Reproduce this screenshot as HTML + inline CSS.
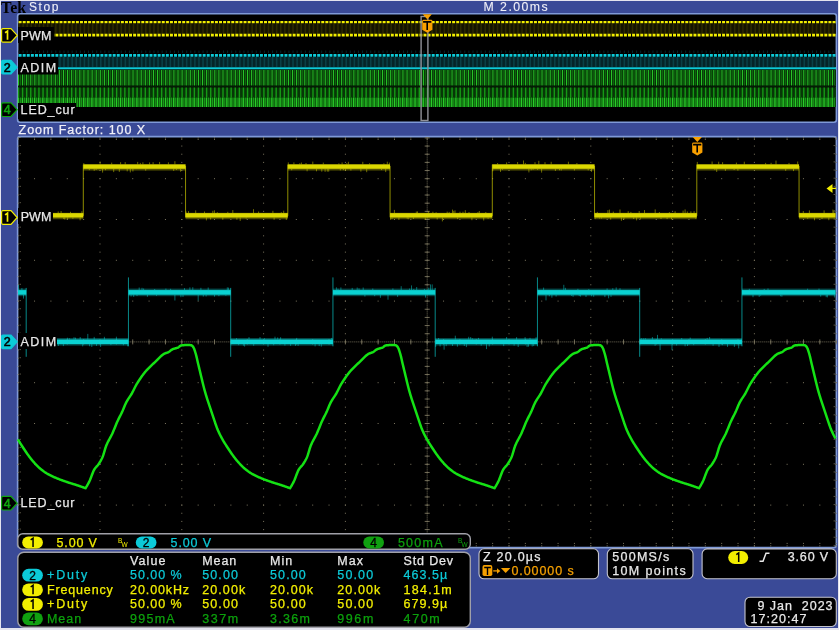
<!DOCTYPE html>
<html><head><meta charset="utf-8"><style>html,body{margin:0;padding:0;background:#3c4b9b;overflow:hidden}svg{display:block;will-change:transform}</style></head>
<body><svg width="839" height="630" viewBox="0 0 839 630"><rect x="0" y="0" width="839" height="630" fill="#e4e4ee"/>
<rect x="1" y="1" width="837" height="627" fill="#3a4a97"/>
<text x="1.0" y="12.6" font-family="Liberation Serif" font-size="16.5" font-weight="bold" fill="#000" text-anchor="start" textLength="25" lengthAdjust="spacingAndGlyphs"  xml:space="preserve">Tek</text>
<text x="29" y="10.9" font-family="Liberation Sans" font-size="12" font-weight="normal" fill="#f0f0f8" text-anchor="start" textLength="29.5" lengthAdjust="spacing"  stroke="#f0f0f8" stroke-width="0.1" xml:space="preserve">Stop</text>
<text x="483.6" y="11" font-family="Liberation Sans" font-size="12.3" font-weight="normal" fill="#f0f0f8" text-anchor="start" textLength="64" lengthAdjust="spacing"  stroke="#f0f0f8" stroke-width="0.1" xml:space="preserve">M 2.00ms</text>
<rect x="17.6" y="13.8" width="818.8" height="108.4" rx="2.5" fill="#000" stroke="#7f9ad8" stroke-width="1.6"/>
<rect x="18" y="23.5" width="818" height="10.5" fill="#141300"/>
<path d="M19.00 23.5v10.5 M23.09 23.5v10.5 M27.18 23.5v10.5 M31.27 23.5v10.5 M35.36 23.5v10.5 M39.45 23.5v10.5 M43.54 23.5v10.5 M47.63 23.5v10.5 M51.72 23.5v10.5 M55.81 23.5v10.5 M59.90 23.5v10.5 M63.99 23.5v10.5 M68.08 23.5v10.5 M72.17 23.5v10.5 M76.26 23.5v10.5 M80.35 23.5v10.5 M84.44 23.5v10.5 M88.53 23.5v10.5 M92.62 23.5v10.5 M96.71 23.5v10.5 M100.80 23.5v10.5 M104.89 23.5v10.5 M108.98 23.5v10.5 M113.07 23.5v10.5 M117.16 23.5v10.5 M121.25 23.5v10.5 M125.34 23.5v10.5 M129.43 23.5v10.5 M133.52 23.5v10.5 M137.61 23.5v10.5 M141.70 23.5v10.5 M145.79 23.5v10.5 M149.88 23.5v10.5 M153.97 23.5v10.5 M158.06 23.5v10.5 M162.15 23.5v10.5 M166.24 23.5v10.5 M170.33 23.5v10.5 M174.42 23.5v10.5 M178.51 23.5v10.5 M182.60 23.5v10.5 M186.69 23.5v10.5 M190.78 23.5v10.5 M194.87 23.5v10.5 M198.96 23.5v10.5 M203.05 23.5v10.5 M207.14 23.5v10.5 M211.23 23.5v10.5 M215.32 23.5v10.5 M219.41 23.5v10.5 M223.50 23.5v10.5 M227.59 23.5v10.5 M231.68 23.5v10.5 M235.77 23.5v10.5 M239.86 23.5v10.5 M243.95 23.5v10.5 M248.04 23.5v10.5 M252.13 23.5v10.5 M256.22 23.5v10.5 M260.31 23.5v10.5 M264.40 23.5v10.5 M268.49 23.5v10.5 M272.58 23.5v10.5 M276.67 23.5v10.5 M280.76 23.5v10.5 M284.85 23.5v10.5 M288.94 23.5v10.5 M293.03 23.5v10.5 M297.12 23.5v10.5 M301.21 23.5v10.5 M305.30 23.5v10.5 M309.39 23.5v10.5 M313.48 23.5v10.5 M317.57 23.5v10.5 M321.66 23.5v10.5 M325.75 23.5v10.5 M329.84 23.5v10.5 M333.93 23.5v10.5 M338.02 23.5v10.5 M342.11 23.5v10.5 M346.20 23.5v10.5 M350.29 23.5v10.5 M354.38 23.5v10.5 M358.47 23.5v10.5 M362.56 23.5v10.5 M366.65 23.5v10.5 M370.74 23.5v10.5 M374.83 23.5v10.5 M378.92 23.5v10.5 M383.01 23.5v10.5 M387.10 23.5v10.5 M391.19 23.5v10.5 M395.28 23.5v10.5 M399.37 23.5v10.5 M403.46 23.5v10.5 M407.55 23.5v10.5 M411.64 23.5v10.5 M415.73 23.5v10.5 M419.82 23.5v10.5 M423.91 23.5v10.5 M428.00 23.5v10.5 M432.09 23.5v10.5 M436.18 23.5v10.5 M440.27 23.5v10.5 M444.36 23.5v10.5 M448.45 23.5v10.5 M452.54 23.5v10.5 M456.63 23.5v10.5 M460.72 23.5v10.5 M464.81 23.5v10.5 M468.90 23.5v10.5 M472.99 23.5v10.5 M477.08 23.5v10.5 M481.17 23.5v10.5 M485.26 23.5v10.5 M489.35 23.5v10.5 M493.44 23.5v10.5 M497.53 23.5v10.5 M501.62 23.5v10.5 M505.71 23.5v10.5 M509.80 23.5v10.5 M513.89 23.5v10.5 M517.98 23.5v10.5 M522.07 23.5v10.5 M526.16 23.5v10.5 M530.25 23.5v10.5 M534.34 23.5v10.5 M538.43 23.5v10.5 M542.52 23.5v10.5 M546.61 23.5v10.5 M550.70 23.5v10.5 M554.79 23.5v10.5 M558.88 23.5v10.5 M562.97 23.5v10.5 M567.06 23.5v10.5 M571.15 23.5v10.5 M575.24 23.5v10.5 M579.33 23.5v10.5 M583.42 23.5v10.5 M587.51 23.5v10.5 M591.60 23.5v10.5 M595.69 23.5v10.5 M599.78 23.5v10.5 M603.87 23.5v10.5 M607.96 23.5v10.5 M612.05 23.5v10.5 M616.14 23.5v10.5 M620.23 23.5v10.5 M624.32 23.5v10.5 M628.41 23.5v10.5 M632.50 23.5v10.5 M636.59 23.5v10.5 M640.68 23.5v10.5 M644.77 23.5v10.5 M648.86 23.5v10.5 M652.95 23.5v10.5 M657.04 23.5v10.5 M661.13 23.5v10.5 M665.22 23.5v10.5 M669.31 23.5v10.5 M673.40 23.5v10.5 M677.49 23.5v10.5 M681.58 23.5v10.5 M685.67 23.5v10.5 M689.76 23.5v10.5 M693.85 23.5v10.5 M697.94 23.5v10.5 M702.03 23.5v10.5 M706.12 23.5v10.5 M710.21 23.5v10.5 M714.30 23.5v10.5 M718.39 23.5v10.5 M722.48 23.5v10.5 M726.57 23.5v10.5 M730.66 23.5v10.5 M734.75 23.5v10.5 M738.84 23.5v10.5 M742.93 23.5v10.5 M747.02 23.5v10.5 M751.11 23.5v10.5 M755.20 23.5v10.5 M759.29 23.5v10.5 M763.38 23.5v10.5 M767.47 23.5v10.5 M771.56 23.5v10.5 M775.65 23.5v10.5 M779.74 23.5v10.5 M783.83 23.5v10.5 M787.92 23.5v10.5 M792.01 23.5v10.5 M796.10 23.5v10.5 M800.19 23.5v10.5 M804.28 23.5v10.5 M808.37 23.5v10.5 M812.46 23.5v10.5 M816.55 23.5v10.5 M820.64 23.5v10.5 M824.73 23.5v10.5 M828.82 23.5v10.5 M832.91 23.5v10.5" stroke="#2c2900" stroke-width="1.6" fill="none" opacity="1.0"/>
<line x1="18.6" y1="22.2" x2="836" y2="22.2" stroke="#f2ee00" stroke-width="2.3" stroke-dasharray="3.0 1.09"/>
<line x1="18.6" y1="35.1" x2="836" y2="35.1" stroke="#f2ee00" stroke-width="2.8" stroke-dasharray="3.0 1.09"/>
<path d="M19.00 50.5v2.5 M23.09 50.5v2.5 M27.18 50.5v2.5 M31.27 50.5v2.5 M35.36 50.5v2.5 M39.45 50.5v2.5 M43.54 50.5v2.5 M47.63 50.5v2.5 M51.72 50.5v2.5 M55.81 50.5v2.5 M59.90 50.5v2.5 M63.99 50.5v2.5 M68.08 50.5v2.5 M72.17 50.5v2.5 M76.26 50.5v2.5 M80.35 50.5v2.5 M84.44 50.5v2.5 M88.53 50.5v2.5 M92.62 50.5v2.5 M96.71 50.5v2.5 M100.80 50.5v2.5 M104.89 50.5v2.5 M108.98 50.5v2.5 M113.07 50.5v2.5 M117.16 50.5v2.5 M121.25 50.5v2.5 M125.34 50.5v2.5 M129.43 50.5v2.5 M133.52 50.5v2.5 M137.61 50.5v2.5 M141.70 50.5v2.5 M145.79 50.5v2.5 M149.88 50.5v2.5 M153.97 50.5v2.5 M158.06 50.5v2.5 M162.15 50.5v2.5 M166.24 50.5v2.5 M170.33 50.5v2.5 M174.42 50.5v2.5 M178.51 50.5v2.5 M182.60 50.5v2.5 M186.69 50.5v2.5 M190.78 50.5v2.5 M194.87 50.5v2.5 M198.96 50.5v2.5 M203.05 50.5v2.5 M207.14 50.5v2.5 M211.23 50.5v2.5 M215.32 50.5v2.5 M219.41 50.5v2.5 M223.50 50.5v2.5 M227.59 50.5v2.5 M231.68 50.5v2.5 M235.77 50.5v2.5 M239.86 50.5v2.5 M243.95 50.5v2.5 M248.04 50.5v2.5 M252.13 50.5v2.5 M256.22 50.5v2.5 M260.31 50.5v2.5 M264.40 50.5v2.5 M268.49 50.5v2.5 M272.58 50.5v2.5 M276.67 50.5v2.5 M280.76 50.5v2.5 M284.85 50.5v2.5 M288.94 50.5v2.5 M293.03 50.5v2.5 M297.12 50.5v2.5 M301.21 50.5v2.5 M305.30 50.5v2.5 M309.39 50.5v2.5 M313.48 50.5v2.5 M317.57 50.5v2.5 M321.66 50.5v2.5 M325.75 50.5v2.5 M329.84 50.5v2.5 M333.93 50.5v2.5 M338.02 50.5v2.5 M342.11 50.5v2.5 M346.20 50.5v2.5 M350.29 50.5v2.5 M354.38 50.5v2.5 M358.47 50.5v2.5 M362.56 50.5v2.5 M366.65 50.5v2.5 M370.74 50.5v2.5 M374.83 50.5v2.5 M378.92 50.5v2.5 M383.01 50.5v2.5 M387.10 50.5v2.5 M391.19 50.5v2.5 M395.28 50.5v2.5 M399.37 50.5v2.5 M403.46 50.5v2.5 M407.55 50.5v2.5 M411.64 50.5v2.5 M415.73 50.5v2.5 M419.82 50.5v2.5 M423.91 50.5v2.5 M428.00 50.5v2.5 M432.09 50.5v2.5 M436.18 50.5v2.5 M440.27 50.5v2.5 M444.36 50.5v2.5 M448.45 50.5v2.5 M452.54 50.5v2.5 M456.63 50.5v2.5 M460.72 50.5v2.5 M464.81 50.5v2.5 M468.90 50.5v2.5 M472.99 50.5v2.5 M477.08 50.5v2.5 M481.17 50.5v2.5 M485.26 50.5v2.5 M489.35 50.5v2.5 M493.44 50.5v2.5 M497.53 50.5v2.5 M501.62 50.5v2.5 M505.71 50.5v2.5 M509.80 50.5v2.5 M513.89 50.5v2.5 M517.98 50.5v2.5 M522.07 50.5v2.5 M526.16 50.5v2.5 M530.25 50.5v2.5 M534.34 50.5v2.5 M538.43 50.5v2.5 M542.52 50.5v2.5 M546.61 50.5v2.5 M550.70 50.5v2.5 M554.79 50.5v2.5 M558.88 50.5v2.5 M562.97 50.5v2.5 M567.06 50.5v2.5 M571.15 50.5v2.5 M575.24 50.5v2.5 M579.33 50.5v2.5 M583.42 50.5v2.5 M587.51 50.5v2.5 M591.60 50.5v2.5 M595.69 50.5v2.5 M599.78 50.5v2.5 M603.87 50.5v2.5 M607.96 50.5v2.5 M612.05 50.5v2.5 M616.14 50.5v2.5 M620.23 50.5v2.5 M624.32 50.5v2.5 M628.41 50.5v2.5 M632.50 50.5v2.5 M636.59 50.5v2.5 M640.68 50.5v2.5 M644.77 50.5v2.5 M648.86 50.5v2.5 M652.95 50.5v2.5 M657.04 50.5v2.5 M661.13 50.5v2.5 M665.22 50.5v2.5 M669.31 50.5v2.5 M673.40 50.5v2.5 M677.49 50.5v2.5 M681.58 50.5v2.5 M685.67 50.5v2.5 M689.76 50.5v2.5 M693.85 50.5v2.5 M697.94 50.5v2.5 M702.03 50.5v2.5 M706.12 50.5v2.5 M710.21 50.5v2.5 M714.30 50.5v2.5 M718.39 50.5v2.5 M722.48 50.5v2.5 M726.57 50.5v2.5 M730.66 50.5v2.5 M734.75 50.5v2.5 M738.84 50.5v2.5 M742.93 50.5v2.5 M747.02 50.5v2.5 M751.11 50.5v2.5 M755.20 50.5v2.5 M759.29 50.5v2.5 M763.38 50.5v2.5 M767.47 50.5v2.5 M771.56 50.5v2.5 M775.65 50.5v2.5 M779.74 50.5v2.5 M783.83 50.5v2.5 M787.92 50.5v2.5 M792.01 50.5v2.5 M796.10 50.5v2.5 M800.19 50.5v2.5 M804.28 50.5v2.5 M808.37 50.5v2.5 M812.46 50.5v2.5 M816.55 50.5v2.5 M820.64 50.5v2.5 M824.73 50.5v2.5 M828.82 50.5v2.5 M832.91 50.5v2.5" stroke="#06262a" stroke-width="1.0" fill="none" opacity="1.0"/>
<rect x="18" y="57" width="818" height="10" fill="#052428"/>
<path d="M19.00 57v10 M23.09 57v10 M27.18 57v10 M31.27 57v10 M35.36 57v10 M39.45 57v10 M43.54 57v10 M47.63 57v10 M51.72 57v10 M55.81 57v10 M59.90 57v10 M63.99 57v10 M68.08 57v10 M72.17 57v10 M76.26 57v10 M80.35 57v10 M84.44 57v10 M88.53 57v10 M92.62 57v10 M96.71 57v10 M100.80 57v10 M104.89 57v10 M108.98 57v10 M113.07 57v10 M117.16 57v10 M121.25 57v10 M125.34 57v10 M129.43 57v10 M133.52 57v10 M137.61 57v10 M141.70 57v10 M145.79 57v10 M149.88 57v10 M153.97 57v10 M158.06 57v10 M162.15 57v10 M166.24 57v10 M170.33 57v10 M174.42 57v10 M178.51 57v10 M182.60 57v10 M186.69 57v10 M190.78 57v10 M194.87 57v10 M198.96 57v10 M203.05 57v10 M207.14 57v10 M211.23 57v10 M215.32 57v10 M219.41 57v10 M223.50 57v10 M227.59 57v10 M231.68 57v10 M235.77 57v10 M239.86 57v10 M243.95 57v10 M248.04 57v10 M252.13 57v10 M256.22 57v10 M260.31 57v10 M264.40 57v10 M268.49 57v10 M272.58 57v10 M276.67 57v10 M280.76 57v10 M284.85 57v10 M288.94 57v10 M293.03 57v10 M297.12 57v10 M301.21 57v10 M305.30 57v10 M309.39 57v10 M313.48 57v10 M317.57 57v10 M321.66 57v10 M325.75 57v10 M329.84 57v10 M333.93 57v10 M338.02 57v10 M342.11 57v10 M346.20 57v10 M350.29 57v10 M354.38 57v10 M358.47 57v10 M362.56 57v10 M366.65 57v10 M370.74 57v10 M374.83 57v10 M378.92 57v10 M383.01 57v10 M387.10 57v10 M391.19 57v10 M395.28 57v10 M399.37 57v10 M403.46 57v10 M407.55 57v10 M411.64 57v10 M415.73 57v10 M419.82 57v10 M423.91 57v10 M428.00 57v10 M432.09 57v10 M436.18 57v10 M440.27 57v10 M444.36 57v10 M448.45 57v10 M452.54 57v10 M456.63 57v10 M460.72 57v10 M464.81 57v10 M468.90 57v10 M472.99 57v10 M477.08 57v10 M481.17 57v10 M485.26 57v10 M489.35 57v10 M493.44 57v10 M497.53 57v10 M501.62 57v10 M505.71 57v10 M509.80 57v10 M513.89 57v10 M517.98 57v10 M522.07 57v10 M526.16 57v10 M530.25 57v10 M534.34 57v10 M538.43 57v10 M542.52 57v10 M546.61 57v10 M550.70 57v10 M554.79 57v10 M558.88 57v10 M562.97 57v10 M567.06 57v10 M571.15 57v10 M575.24 57v10 M579.33 57v10 M583.42 57v10 M587.51 57v10 M591.60 57v10 M595.69 57v10 M599.78 57v10 M603.87 57v10 M607.96 57v10 M612.05 57v10 M616.14 57v10 M620.23 57v10 M624.32 57v10 M628.41 57v10 M632.50 57v10 M636.59 57v10 M640.68 57v10 M644.77 57v10 M648.86 57v10 M652.95 57v10 M657.04 57v10 M661.13 57v10 M665.22 57v10 M669.31 57v10 M673.40 57v10 M677.49 57v10 M681.58 57v10 M685.67 57v10 M689.76 57v10 M693.85 57v10 M697.94 57v10 M702.03 57v10 M706.12 57v10 M710.21 57v10 M714.30 57v10 M718.39 57v10 M722.48 57v10 M726.57 57v10 M730.66 57v10 M734.75 57v10 M738.84 57v10 M742.93 57v10 M747.02 57v10 M751.11 57v10 M755.20 57v10 M759.29 57v10 M763.38 57v10 M767.47 57v10 M771.56 57v10 M775.65 57v10 M779.74 57v10 M783.83 57v10 M787.92 57v10 M792.01 57v10 M796.10 57v10 M800.19 57v10 M804.28 57v10 M808.37 57v10 M812.46 57v10 M816.55 57v10 M820.64 57v10 M824.73 57v10 M828.82 57v10 M832.91 57v10" stroke="#0a4046" stroke-width="1.6" fill="none" opacity="1.0"/>
<line x1="18.6" y1="55.4" x2="836" y2="55.4" stroke="#0ccad8" stroke-width="2.8" stroke-dasharray="3.0 1.09"/>
<line x1="18" y1="68.3" x2="836" y2="68.3" stroke="#0ccad8" stroke-width="2.2"/>
<rect x="18" y="69.5" width="818" height="16" fill="#062806"/>
<rect x="18" y="85.5" width="818" height="2" fill="#041c04"/>
<rect x="18" y="87.5" width="818" height="10" fill="#073607"/>
<rect x="18" y="97.5" width="818" height="9.5" fill="#084008"/>
<path d="M20.50 70v15.5 M24.59 70v15.5 M28.68 70v15.5 M32.77 70v15.5 M36.86 70v15.5 M40.95 70v15.5 M45.04 70v15.5 M49.13 70v15.5 M53.22 70v15.5 M57.31 70v15.5 M61.40 70v15.5 M65.49 70v15.5 M69.58 70v15.5 M73.67 70v15.5 M77.76 70v15.5 M81.85 70v15.5 M85.94 70v15.5 M90.03 70v15.5 M94.12 70v15.5 M98.21 70v15.5 M102.30 70v15.5 M106.39 70v15.5 M110.48 70v15.5 M114.57 70v15.5 M118.66 70v15.5 M122.75 70v15.5 M126.84 70v15.5 M130.93 70v15.5 M135.02 70v15.5 M139.11 70v15.5 M143.20 70v15.5 M147.29 70v15.5 M151.38 70v15.5 M155.47 70v15.5 M159.56 70v15.5 M163.65 70v15.5 M167.74 70v15.5 M171.83 70v15.5 M175.92 70v15.5 M180.01 70v15.5 M184.10 70v15.5 M188.19 70v15.5 M192.28 70v15.5 M196.37 70v15.5 M200.46 70v15.5 M204.55 70v15.5 M208.64 70v15.5 M212.73 70v15.5 M216.82 70v15.5 M220.91 70v15.5 M225.00 70v15.5 M229.09 70v15.5 M233.18 70v15.5 M237.27 70v15.5 M241.36 70v15.5 M245.45 70v15.5 M249.54 70v15.5 M253.63 70v15.5 M257.72 70v15.5 M261.81 70v15.5 M265.90 70v15.5 M269.99 70v15.5 M274.08 70v15.5 M278.17 70v15.5 M282.26 70v15.5 M286.35 70v15.5 M290.44 70v15.5 M294.53 70v15.5 M298.62 70v15.5 M302.71 70v15.5 M306.80 70v15.5 M310.89 70v15.5 M314.98 70v15.5 M319.07 70v15.5 M323.16 70v15.5 M327.25 70v15.5 M331.34 70v15.5 M335.43 70v15.5 M339.52 70v15.5 M343.61 70v15.5 M347.70 70v15.5 M351.79 70v15.5 M355.88 70v15.5 M359.97 70v15.5 M364.06 70v15.5 M368.15 70v15.5 M372.24 70v15.5 M376.33 70v15.5 M380.42 70v15.5 M384.51 70v15.5 M388.60 70v15.5 M392.69 70v15.5 M396.78 70v15.5 M400.87 70v15.5 M404.96 70v15.5 M409.05 70v15.5 M413.14 70v15.5 M417.23 70v15.5 M421.32 70v15.5 M425.41 70v15.5 M429.50 70v15.5 M433.59 70v15.5 M437.68 70v15.5 M441.77 70v15.5 M445.86 70v15.5 M449.95 70v15.5 M454.04 70v15.5 M458.13 70v15.5 M462.22 70v15.5 M466.31 70v15.5 M470.40 70v15.5 M474.49 70v15.5 M478.58 70v15.5 M482.67 70v15.5 M486.76 70v15.5 M490.85 70v15.5 M494.94 70v15.5 M499.03 70v15.5 M503.12 70v15.5 M507.21 70v15.5 M511.30 70v15.5 M515.39 70v15.5 M519.48 70v15.5 M523.57 70v15.5 M527.66 70v15.5 M531.75 70v15.5 M535.84 70v15.5 M539.93 70v15.5 M544.02 70v15.5 M548.11 70v15.5 M552.20 70v15.5 M556.29 70v15.5 M560.38 70v15.5 M564.47 70v15.5 M568.56 70v15.5 M572.65 70v15.5 M576.74 70v15.5 M580.83 70v15.5 M584.92 70v15.5 M589.01 70v15.5 M593.10 70v15.5 M597.19 70v15.5 M601.28 70v15.5 M605.37 70v15.5 M609.46 70v15.5 M613.55 70v15.5 M617.64 70v15.5 M621.73 70v15.5 M625.82 70v15.5 M629.91 70v15.5 M634.00 70v15.5 M638.09 70v15.5 M642.18 70v15.5 M646.27 70v15.5 M650.36 70v15.5 M654.45 70v15.5 M658.54 70v15.5 M662.63 70v15.5 M666.72 70v15.5 M670.81 70v15.5 M674.90 70v15.5 M678.99 70v15.5 M683.08 70v15.5 M687.17 70v15.5 M691.26 70v15.5 M695.35 70v15.5 M699.44 70v15.5 M703.53 70v15.5 M707.62 70v15.5 M711.71 70v15.5 M715.80 70v15.5 M719.89 70v15.5 M723.98 70v15.5 M728.07 70v15.5 M732.16 70v15.5 M736.25 70v15.5 M740.34 70v15.5 M744.43 70v15.5 M748.52 70v15.5 M752.61 70v15.5 M756.70 70v15.5 M760.79 70v15.5 M764.88 70v15.5 M768.97 70v15.5 M773.06 70v15.5 M777.15 70v15.5 M781.24 70v15.5 M785.33 70v15.5 M789.42 70v15.5 M793.51 70v15.5 M797.60 70v15.5 M801.69 70v15.5 M805.78 70v15.5 M809.87 70v15.5 M813.96 70v15.5 M818.05 70v15.5 M822.14 70v15.5 M826.23 70v15.5 M830.32 70v15.5 M834.41 70v15.5" stroke="#0e640e" stroke-width="1.4" fill="none" opacity="1.0"/>
<path d="M18.50 70v15.5 M22.59 70v15.5 M26.68 70v15.5 M30.77 70v15.5 M34.86 70v15.5 M38.95 70v15.5 M43.04 70v15.5 M47.13 70v15.5 M51.22 70v15.5 M55.31 70v15.5 M59.40 70v15.5 M63.49 70v15.5 M67.58 70v15.5 M71.67 70v15.5 M75.76 70v15.5 M79.85 70v15.5 M83.94 70v15.5 M88.03 70v15.5 M92.12 70v15.5 M96.21 70v15.5 M100.30 70v15.5 M104.39 70v15.5 M108.48 70v15.5 M112.57 70v15.5 M116.66 70v15.5 M120.75 70v15.5 M124.84 70v15.5 M128.93 70v15.5 M133.02 70v15.5 M137.11 70v15.5 M141.20 70v15.5 M145.29 70v15.5 M149.38 70v15.5 M153.47 70v15.5 M157.56 70v15.5 M161.65 70v15.5 M165.74 70v15.5 M169.83 70v15.5 M173.92 70v15.5 M178.01 70v15.5 M182.10 70v15.5 M186.19 70v15.5 M190.28 70v15.5 M194.37 70v15.5 M198.46 70v15.5 M202.55 70v15.5 M206.64 70v15.5 M210.73 70v15.5 M214.82 70v15.5 M218.91 70v15.5 M223.00 70v15.5 M227.09 70v15.5 M231.18 70v15.5 M235.27 70v15.5 M239.36 70v15.5 M243.45 70v15.5 M247.54 70v15.5 M251.63 70v15.5 M255.72 70v15.5 M259.81 70v15.5 M263.90 70v15.5 M267.99 70v15.5 M272.08 70v15.5 M276.17 70v15.5 M280.26 70v15.5 M284.35 70v15.5 M288.44 70v15.5 M292.53 70v15.5 M296.62 70v15.5 M300.71 70v15.5 M304.80 70v15.5 M308.89 70v15.5 M312.98 70v15.5 M317.07 70v15.5 M321.16 70v15.5 M325.25 70v15.5 M329.34 70v15.5 M333.43 70v15.5 M337.52 70v15.5 M341.61 70v15.5 M345.70 70v15.5 M349.79 70v15.5 M353.88 70v15.5 M357.97 70v15.5 M362.06 70v15.5 M366.15 70v15.5 M370.24 70v15.5 M374.33 70v15.5 M378.42 70v15.5 M382.51 70v15.5 M386.60 70v15.5 M390.69 70v15.5 M394.78 70v15.5 M398.87 70v15.5 M402.96 70v15.5 M407.05 70v15.5 M411.14 70v15.5 M415.23 70v15.5 M419.32 70v15.5 M423.41 70v15.5 M427.50 70v15.5 M431.59 70v15.5 M435.68 70v15.5 M439.77 70v15.5 M443.86 70v15.5 M447.95 70v15.5 M452.04 70v15.5 M456.13 70v15.5 M460.22 70v15.5 M464.31 70v15.5 M468.40 70v15.5 M472.49 70v15.5 M476.58 70v15.5 M480.67 70v15.5 M484.76 70v15.5 M488.85 70v15.5 M492.94 70v15.5 M497.03 70v15.5 M501.12 70v15.5 M505.21 70v15.5 M509.30 70v15.5 M513.39 70v15.5 M517.48 70v15.5 M521.57 70v15.5 M525.66 70v15.5 M529.75 70v15.5 M533.84 70v15.5 M537.93 70v15.5 M542.02 70v15.5 M546.11 70v15.5 M550.20 70v15.5 M554.29 70v15.5 M558.38 70v15.5 M562.47 70v15.5 M566.56 70v15.5 M570.65 70v15.5 M574.74 70v15.5 M578.83 70v15.5 M582.92 70v15.5 M587.01 70v15.5 M591.10 70v15.5 M595.19 70v15.5 M599.28 70v15.5 M603.37 70v15.5 M607.46 70v15.5 M611.55 70v15.5 M615.64 70v15.5 M619.73 70v15.5 M623.82 70v15.5 M627.91 70v15.5 M632.00 70v15.5 M636.09 70v15.5 M640.18 70v15.5 M644.27 70v15.5 M648.36 70v15.5 M652.45 70v15.5 M656.54 70v15.5 M660.63 70v15.5 M664.72 70v15.5 M668.81 70v15.5 M672.90 70v15.5 M676.99 70v15.5 M681.08 70v15.5 M685.17 70v15.5 M689.26 70v15.5 M693.35 70v15.5 M697.44 70v15.5 M701.53 70v15.5 M705.62 70v15.5 M709.71 70v15.5 M713.80 70v15.5 M717.89 70v15.5 M721.98 70v15.5 M726.07 70v15.5 M730.16 70v15.5 M734.25 70v15.5 M738.34 70v15.5 M742.43 70v15.5 M746.52 70v15.5 M750.61 70v15.5 M754.70 70v15.5 M758.79 70v15.5 M762.88 70v15.5 M766.97 70v15.5 M771.06 70v15.5 M775.15 70v15.5 M779.24 70v15.5 M783.33 70v15.5 M787.42 70v15.5 M791.51 70v15.5 M795.60 70v15.5 M799.69 70v15.5 M803.78 70v15.5 M807.87 70v15.5 M811.96 70v15.5 M816.05 70v15.5 M820.14 70v15.5 M824.23 70v15.5 M828.32 70v15.5 M832.41 70v15.5" stroke="#26c426" stroke-width="1.1" fill="none" opacity="1.0"/>
<path d="M18.50 87.5v10 M22.59 87.5v10 M26.68 87.5v10 M30.77 87.5v10 M34.86 87.5v10 M38.95 87.5v10 M43.04 87.5v10 M47.13 87.5v10 M51.22 87.5v10 M55.31 87.5v10 M59.40 87.5v10 M63.49 87.5v10 M67.58 87.5v10 M71.67 87.5v10 M75.76 87.5v10 M79.85 87.5v10 M83.94 87.5v10 M88.03 87.5v10 M92.12 87.5v10 M96.21 87.5v10 M100.30 87.5v10 M104.39 87.5v10 M108.48 87.5v10 M112.57 87.5v10 M116.66 87.5v10 M120.75 87.5v10 M124.84 87.5v10 M128.93 87.5v10 M133.02 87.5v10 M137.11 87.5v10 M141.20 87.5v10 M145.29 87.5v10 M149.38 87.5v10 M153.47 87.5v10 M157.56 87.5v10 M161.65 87.5v10 M165.74 87.5v10 M169.83 87.5v10 M173.92 87.5v10 M178.01 87.5v10 M182.10 87.5v10 M186.19 87.5v10 M190.28 87.5v10 M194.37 87.5v10 M198.46 87.5v10 M202.55 87.5v10 M206.64 87.5v10 M210.73 87.5v10 M214.82 87.5v10 M218.91 87.5v10 M223.00 87.5v10 M227.09 87.5v10 M231.18 87.5v10 M235.27 87.5v10 M239.36 87.5v10 M243.45 87.5v10 M247.54 87.5v10 M251.63 87.5v10 M255.72 87.5v10 M259.81 87.5v10 M263.90 87.5v10 M267.99 87.5v10 M272.08 87.5v10 M276.17 87.5v10 M280.26 87.5v10 M284.35 87.5v10 M288.44 87.5v10 M292.53 87.5v10 M296.62 87.5v10 M300.71 87.5v10 M304.80 87.5v10 M308.89 87.5v10 M312.98 87.5v10 M317.07 87.5v10 M321.16 87.5v10 M325.25 87.5v10 M329.34 87.5v10 M333.43 87.5v10 M337.52 87.5v10 M341.61 87.5v10 M345.70 87.5v10 M349.79 87.5v10 M353.88 87.5v10 M357.97 87.5v10 M362.06 87.5v10 M366.15 87.5v10 M370.24 87.5v10 M374.33 87.5v10 M378.42 87.5v10 M382.51 87.5v10 M386.60 87.5v10 M390.69 87.5v10 M394.78 87.5v10 M398.87 87.5v10 M402.96 87.5v10 M407.05 87.5v10 M411.14 87.5v10 M415.23 87.5v10 M419.32 87.5v10 M423.41 87.5v10 M427.50 87.5v10 M431.59 87.5v10 M435.68 87.5v10 M439.77 87.5v10 M443.86 87.5v10 M447.95 87.5v10 M452.04 87.5v10 M456.13 87.5v10 M460.22 87.5v10 M464.31 87.5v10 M468.40 87.5v10 M472.49 87.5v10 M476.58 87.5v10 M480.67 87.5v10 M484.76 87.5v10 M488.85 87.5v10 M492.94 87.5v10 M497.03 87.5v10 M501.12 87.5v10 M505.21 87.5v10 M509.30 87.5v10 M513.39 87.5v10 M517.48 87.5v10 M521.57 87.5v10 M525.66 87.5v10 M529.75 87.5v10 M533.84 87.5v10 M537.93 87.5v10 M542.02 87.5v10 M546.11 87.5v10 M550.20 87.5v10 M554.29 87.5v10 M558.38 87.5v10 M562.47 87.5v10 M566.56 87.5v10 M570.65 87.5v10 M574.74 87.5v10 M578.83 87.5v10 M582.92 87.5v10 M587.01 87.5v10 M591.10 87.5v10 M595.19 87.5v10 M599.28 87.5v10 M603.37 87.5v10 M607.46 87.5v10 M611.55 87.5v10 M615.64 87.5v10 M619.73 87.5v10 M623.82 87.5v10 M627.91 87.5v10 M632.00 87.5v10 M636.09 87.5v10 M640.18 87.5v10 M644.27 87.5v10 M648.36 87.5v10 M652.45 87.5v10 M656.54 87.5v10 M660.63 87.5v10 M664.72 87.5v10 M668.81 87.5v10 M672.90 87.5v10 M676.99 87.5v10 M681.08 87.5v10 M685.17 87.5v10 M689.26 87.5v10 M693.35 87.5v10 M697.44 87.5v10 M701.53 87.5v10 M705.62 87.5v10 M709.71 87.5v10 M713.80 87.5v10 M717.89 87.5v10 M721.98 87.5v10 M726.07 87.5v10 M730.16 87.5v10 M734.25 87.5v10 M738.34 87.5v10 M742.43 87.5v10 M746.52 87.5v10 M750.61 87.5v10 M754.70 87.5v10 M758.79 87.5v10 M762.88 87.5v10 M766.97 87.5v10 M771.06 87.5v10 M775.15 87.5v10 M779.24 87.5v10 M783.33 87.5v10 M787.42 87.5v10 M791.51 87.5v10 M795.60 87.5v10 M799.69 87.5v10 M803.78 87.5v10 M807.87 87.5v10 M811.96 87.5v10 M816.05 87.5v10 M820.14 87.5v10 M824.23 87.5v10 M828.32 87.5v10 M832.41 87.5v10" stroke="#159a15" stroke-width="1.4" fill="none" opacity="1.0"/>
<path d="M18.30 97.5v9.5 M22.39 97.5v9.5 M26.48 97.5v9.5 M30.57 97.5v9.5 M34.66 97.5v9.5 M38.75 97.5v9.5 M42.84 97.5v9.5 M46.93 97.5v9.5 M51.02 97.5v9.5 M55.11 97.5v9.5 M59.20 97.5v9.5 M63.29 97.5v9.5 M67.38 97.5v9.5 M71.47 97.5v9.5 M75.56 97.5v9.5 M79.65 97.5v9.5 M83.74 97.5v9.5 M87.83 97.5v9.5 M91.92 97.5v9.5 M96.01 97.5v9.5 M100.10 97.5v9.5 M104.19 97.5v9.5 M108.28 97.5v9.5 M112.37 97.5v9.5 M116.46 97.5v9.5 M120.55 97.5v9.5 M124.64 97.5v9.5 M128.73 97.5v9.5 M132.82 97.5v9.5 M136.91 97.5v9.5 M141.00 97.5v9.5 M145.09 97.5v9.5 M149.18 97.5v9.5 M153.27 97.5v9.5 M157.36 97.5v9.5 M161.45 97.5v9.5 M165.54 97.5v9.5 M169.63 97.5v9.5 M173.72 97.5v9.5 M177.81 97.5v9.5 M181.90 97.5v9.5 M185.99 97.5v9.5 M190.08 97.5v9.5 M194.17 97.5v9.5 M198.26 97.5v9.5 M202.35 97.5v9.5 M206.44 97.5v9.5 M210.53 97.5v9.5 M214.62 97.5v9.5 M218.71 97.5v9.5 M222.80 97.5v9.5 M226.89 97.5v9.5 M230.98 97.5v9.5 M235.07 97.5v9.5 M239.16 97.5v9.5 M243.25 97.5v9.5 M247.34 97.5v9.5 M251.43 97.5v9.5 M255.52 97.5v9.5 M259.61 97.5v9.5 M263.70 97.5v9.5 M267.79 97.5v9.5 M271.88 97.5v9.5 M275.97 97.5v9.5 M280.06 97.5v9.5 M284.15 97.5v9.5 M288.24 97.5v9.5 M292.33 97.5v9.5 M296.42 97.5v9.5 M300.51 97.5v9.5 M304.60 97.5v9.5 M308.69 97.5v9.5 M312.78 97.5v9.5 M316.87 97.5v9.5 M320.96 97.5v9.5 M325.05 97.5v9.5 M329.14 97.5v9.5 M333.23 97.5v9.5 M337.32 97.5v9.5 M341.41 97.5v9.5 M345.50 97.5v9.5 M349.59 97.5v9.5 M353.68 97.5v9.5 M357.77 97.5v9.5 M361.86 97.5v9.5 M365.95 97.5v9.5 M370.04 97.5v9.5 M374.13 97.5v9.5 M378.22 97.5v9.5 M382.31 97.5v9.5 M386.40 97.5v9.5 M390.49 97.5v9.5 M394.58 97.5v9.5 M398.67 97.5v9.5 M402.76 97.5v9.5 M406.85 97.5v9.5 M410.94 97.5v9.5 M415.03 97.5v9.5 M419.12 97.5v9.5 M423.21 97.5v9.5 M427.30 97.5v9.5 M431.39 97.5v9.5 M435.48 97.5v9.5 M439.57 97.5v9.5 M443.66 97.5v9.5 M447.75 97.5v9.5 M451.84 97.5v9.5 M455.93 97.5v9.5 M460.02 97.5v9.5 M464.11 97.5v9.5 M468.20 97.5v9.5 M472.29 97.5v9.5 M476.38 97.5v9.5 M480.47 97.5v9.5 M484.56 97.5v9.5 M488.65 97.5v9.5 M492.74 97.5v9.5 M496.83 97.5v9.5 M500.92 97.5v9.5 M505.01 97.5v9.5 M509.10 97.5v9.5 M513.19 97.5v9.5 M517.28 97.5v9.5 M521.37 97.5v9.5 M525.46 97.5v9.5 M529.55 97.5v9.5 M533.64 97.5v9.5 M537.73 97.5v9.5 M541.82 97.5v9.5 M545.91 97.5v9.5 M550.00 97.5v9.5 M554.09 97.5v9.5 M558.18 97.5v9.5 M562.27 97.5v9.5 M566.36 97.5v9.5 M570.45 97.5v9.5 M574.54 97.5v9.5 M578.63 97.5v9.5 M582.72 97.5v9.5 M586.81 97.5v9.5 M590.90 97.5v9.5 M594.99 97.5v9.5 M599.08 97.5v9.5 M603.17 97.5v9.5 M607.26 97.5v9.5 M611.35 97.5v9.5 M615.44 97.5v9.5 M619.53 97.5v9.5 M623.62 97.5v9.5 M627.71 97.5v9.5 M631.80 97.5v9.5 M635.89 97.5v9.5 M639.98 97.5v9.5 M644.07 97.5v9.5 M648.16 97.5v9.5 M652.25 97.5v9.5 M656.34 97.5v9.5 M660.43 97.5v9.5 M664.52 97.5v9.5 M668.61 97.5v9.5 M672.70 97.5v9.5 M676.79 97.5v9.5 M680.88 97.5v9.5 M684.97 97.5v9.5 M689.06 97.5v9.5 M693.15 97.5v9.5 M697.24 97.5v9.5 M701.33 97.5v9.5 M705.42 97.5v9.5 M709.51 97.5v9.5 M713.60 97.5v9.5 M717.69 97.5v9.5 M721.78 97.5v9.5 M725.87 97.5v9.5 M729.96 97.5v9.5 M734.05 97.5v9.5 M738.14 97.5v9.5 M742.23 97.5v9.5 M746.32 97.5v9.5 M750.41 97.5v9.5 M754.50 97.5v9.5 M758.59 97.5v9.5 M762.68 97.5v9.5 M766.77 97.5v9.5 M770.86 97.5v9.5 M774.95 97.5v9.5 M779.04 97.5v9.5 M783.13 97.5v9.5 M787.22 97.5v9.5 M791.31 97.5v9.5 M795.40 97.5v9.5 M799.49 97.5v9.5 M803.58 97.5v9.5 M807.67 97.5v9.5 M811.76 97.5v9.5 M815.85 97.5v9.5 M819.94 97.5v9.5 M824.03 97.5v9.5 M828.12 97.5v9.5 M832.21 97.5v9.5" stroke="#28cc28" stroke-width="1.4" fill="none" opacity="1.0"/>
<path d="M20.30 97.5v9.5 M24.39 97.5v9.5 M28.48 97.5v9.5 M32.57 97.5v9.5 M36.66 97.5v9.5 M40.75 97.5v9.5 M44.84 97.5v9.5 M48.93 97.5v9.5 M53.02 97.5v9.5 M57.11 97.5v9.5 M61.20 97.5v9.5 M65.29 97.5v9.5 M69.38 97.5v9.5 M73.47 97.5v9.5 M77.56 97.5v9.5 M81.65 97.5v9.5 M85.74 97.5v9.5 M89.83 97.5v9.5 M93.92 97.5v9.5 M98.01 97.5v9.5 M102.10 97.5v9.5 M106.19 97.5v9.5 M110.28 97.5v9.5 M114.37 97.5v9.5 M118.46 97.5v9.5 M122.55 97.5v9.5 M126.64 97.5v9.5 M130.73 97.5v9.5 M134.82 97.5v9.5 M138.91 97.5v9.5 M143.00 97.5v9.5 M147.09 97.5v9.5 M151.18 97.5v9.5 M155.27 97.5v9.5 M159.36 97.5v9.5 M163.45 97.5v9.5 M167.54 97.5v9.5 M171.63 97.5v9.5 M175.72 97.5v9.5 M179.81 97.5v9.5 M183.90 97.5v9.5 M187.99 97.5v9.5 M192.08 97.5v9.5 M196.17 97.5v9.5 M200.26 97.5v9.5 M204.35 97.5v9.5 M208.44 97.5v9.5 M212.53 97.5v9.5 M216.62 97.5v9.5 M220.71 97.5v9.5 M224.80 97.5v9.5 M228.89 97.5v9.5 M232.98 97.5v9.5 M237.07 97.5v9.5 M241.16 97.5v9.5 M245.25 97.5v9.5 M249.34 97.5v9.5 M253.43 97.5v9.5 M257.52 97.5v9.5 M261.61 97.5v9.5 M265.70 97.5v9.5 M269.79 97.5v9.5 M273.88 97.5v9.5 M277.97 97.5v9.5 M282.06 97.5v9.5 M286.15 97.5v9.5 M290.24 97.5v9.5 M294.33 97.5v9.5 M298.42 97.5v9.5 M302.51 97.5v9.5 M306.60 97.5v9.5 M310.69 97.5v9.5 M314.78 97.5v9.5 M318.87 97.5v9.5 M322.96 97.5v9.5 M327.05 97.5v9.5 M331.14 97.5v9.5 M335.23 97.5v9.5 M339.32 97.5v9.5 M343.41 97.5v9.5 M347.50 97.5v9.5 M351.59 97.5v9.5 M355.68 97.5v9.5 M359.77 97.5v9.5 M363.86 97.5v9.5 M367.95 97.5v9.5 M372.04 97.5v9.5 M376.13 97.5v9.5 M380.22 97.5v9.5 M384.31 97.5v9.5 M388.40 97.5v9.5 M392.49 97.5v9.5 M396.58 97.5v9.5 M400.67 97.5v9.5 M404.76 97.5v9.5 M408.85 97.5v9.5 M412.94 97.5v9.5 M417.03 97.5v9.5 M421.12 97.5v9.5 M425.21 97.5v9.5 M429.30 97.5v9.5 M433.39 97.5v9.5 M437.48 97.5v9.5 M441.57 97.5v9.5 M445.66 97.5v9.5 M449.75 97.5v9.5 M453.84 97.5v9.5 M457.93 97.5v9.5 M462.02 97.5v9.5 M466.11 97.5v9.5 M470.20 97.5v9.5 M474.29 97.5v9.5 M478.38 97.5v9.5 M482.47 97.5v9.5 M486.56 97.5v9.5 M490.65 97.5v9.5 M494.74 97.5v9.5 M498.83 97.5v9.5 M502.92 97.5v9.5 M507.01 97.5v9.5 M511.10 97.5v9.5 M515.19 97.5v9.5 M519.28 97.5v9.5 M523.37 97.5v9.5 M527.46 97.5v9.5 M531.55 97.5v9.5 M535.64 97.5v9.5 M539.73 97.5v9.5 M543.82 97.5v9.5 M547.91 97.5v9.5 M552.00 97.5v9.5 M556.09 97.5v9.5 M560.18 97.5v9.5 M564.27 97.5v9.5 M568.36 97.5v9.5 M572.45 97.5v9.5 M576.54 97.5v9.5 M580.63 97.5v9.5 M584.72 97.5v9.5 M588.81 97.5v9.5 M592.90 97.5v9.5 M596.99 97.5v9.5 M601.08 97.5v9.5 M605.17 97.5v9.5 M609.26 97.5v9.5 M613.35 97.5v9.5 M617.44 97.5v9.5 M621.53 97.5v9.5 M625.62 97.5v9.5 M629.71 97.5v9.5 M633.80 97.5v9.5 M637.89 97.5v9.5 M641.98 97.5v9.5 M646.07 97.5v9.5 M650.16 97.5v9.5 M654.25 97.5v9.5 M658.34 97.5v9.5 M662.43 97.5v9.5 M666.52 97.5v9.5 M670.61 97.5v9.5 M674.70 97.5v9.5 M678.79 97.5v9.5 M682.88 97.5v9.5 M686.97 97.5v9.5 M691.06 97.5v9.5 M695.15 97.5v9.5 M699.24 97.5v9.5 M703.33 97.5v9.5 M707.42 97.5v9.5 M711.51 97.5v9.5 M715.60 97.5v9.5 M719.69 97.5v9.5 M723.78 97.5v9.5 M727.87 97.5v9.5 M731.96 97.5v9.5 M736.05 97.5v9.5 M740.14 97.5v9.5 M744.23 97.5v9.5 M748.32 97.5v9.5 M752.41 97.5v9.5 M756.50 97.5v9.5 M760.59 97.5v9.5 M764.68 97.5v9.5 M768.77 97.5v9.5 M772.86 97.5v9.5 M776.95 97.5v9.5 M781.04 97.5v9.5 M785.13 97.5v9.5 M789.22 97.5v9.5 M793.31 97.5v9.5 M797.40 97.5v9.5 M801.49 97.5v9.5 M805.58 97.5v9.5 M809.67 97.5v9.5 M813.76 97.5v9.5 M817.85 97.5v9.5 M821.94 97.5v9.5 M826.03 97.5v9.5 M830.12 97.5v9.5 M834.21 97.5v9.5" stroke="#1a9a1a" stroke-width="1.2" fill="none" opacity="1.0"/>
<rect x="421.1" y="16.5" width="6.8" height="104" fill="none" stroke="#909098" stroke-width="1.4"/>
<path d="M422.7 14.2 h9.2 l-4.6 5z" fill="#f8a000"/>
<path d="M422.2 21.0 q0 -1.3 1.3 -1.3 h7.6 q1.3 0 1.3 1.3 v8.7 l-5.1 3 l-5.1 -3z" fill="#f8a000"/>
<path d="M423.1 21.9 h8.2 M427.2 21.9 v8" stroke="#000" stroke-width="1.6" fill="none"/>
<rect x="18" y="27" width="36" height="16" fill="#000"/>
<rect x="18" y="57" width="40" height="17.5" fill="#000"/>
<rect x="18" y="103" width="58" height="16" fill="#000"/>
<text x="20.6" y="39.5" font-family="Liberation Sans" font-size="12.5" font-weight="normal" fill="#e8e8e8" text-anchor="start" textLength="30.7" lengthAdjust="spacing"  stroke="#e8e8e8" stroke-width="0.25" xml:space="preserve">PWM</text>
<text x="20.6" y="71.6" font-family="Liberation Sans" font-size="12.5" font-weight="normal" fill="#e8e8e8" text-anchor="start" textLength="35.5" lengthAdjust="spacing"  stroke="#e8e8e8" stroke-width="0.25" xml:space="preserve">ADIM</text>
<text x="20.6" y="113.6" font-family="Liberation Sans" font-size="12.5" font-weight="normal" fill="#e8e8e8" text-anchor="start" textLength="54" lengthAdjust="spacing"  stroke="#e8e8e8" stroke-width="0.25" xml:space="preserve">LED_cur</text>
<path d="M1.6 29.799999999999997 q0 -1.2 1.2 -1.2 h8.2 l6.2 6.8 l-6.2 6.8 h-8.2 q-1.2 0 -1.2 -1.2z" fill="#000" stroke="#f2ee00" stroke-width="1.2"/>
<path d="M7.50 39.70 V31.10 L5.10 32.80" stroke="#f2ee00" stroke-width="1.7" fill="none" stroke-linejoin="miter"/>
<path d="M1.6 61.60000000000001 q0 -1.2 1.2 -1.2 h8.2 l6.2 6.8 l-6.2 6.8 h-8.2 q-1.2 0 -1.2 -1.2z" fill="#0ccad8" stroke="#0ccad8" stroke-width="1.2"/>
<text x="7.2" y="71.7" font-family="Liberation Sans" font-size="12.5" font-weight="normal" fill="#000" text-anchor="middle"  stroke="#000" stroke-width="0.6" xml:space="preserve">2</text>
<path d="M1.6 104.10000000000001 q0 -1.2 1.2 -1.2 h8.2 l6.2 6.8 l-6.2 6.8 h-8.2 q-1.2 0 -1.2 -1.2z" fill="#000" stroke="#0ea80e" stroke-width="1.2"/>
<text x="7.2" y="114.2" font-family="Liberation Sans" font-size="12.5" font-weight="normal" fill="#0ea80e" text-anchor="middle"  stroke="#0ea80e" stroke-width="0.6" xml:space="preserve">4</text>
<text x="18.6" y="133.8" font-family="Liberation Sans" font-size="12.5" font-weight="normal" fill="#f0f0f8" text-anchor="start" textLength="126.5" lengthAdjust="spacing"  stroke="#f0f0f8" stroke-width="0.25" xml:space="preserve">Zoom Factor: 100 X</text>
<rect x="17.6" y="136.6" width="818.8" height="411" rx="2.5" fill="#000" stroke="#7f9ad8" stroke-width="1.6"/>
<path d="M17.70 137.90h1 M17.70 146.06h1 M17.70 154.22h1 M17.70 162.38h1 M17.70 170.54h1 M17.70 178.70h1 M17.70 186.86h1 M17.70 195.02h1 M17.70 203.18h1 M17.70 211.34h1 M17.70 219.50h1 M17.70 227.66h1 M17.70 235.82h1 M17.70 243.98h1 M17.70 252.14h1 M17.70 260.30h1 M17.70 268.46h1 M17.70 276.62h1 M17.70 284.78h1 M17.70 292.94h1 M17.70 301.10h1 M17.70 309.26h1 M17.70 317.42h1 M17.70 325.58h1 M17.70 333.74h1 M17.70 341.90h1 M17.70 350.06h1 M17.70 358.22h1 M17.70 366.38h1 M17.70 374.54h1 M17.70 382.70h1 M17.70 390.86h1 M17.70 399.02h1 M17.70 407.18h1 M17.70 415.34h1 M17.70 423.50h1 M17.70 431.66h1 M17.70 439.82h1 M17.70 447.98h1 M17.70 456.14h1 M17.70 464.30h1 M17.70 472.46h1 M17.70 480.62h1 M17.70 488.78h1 M17.70 496.94h1 M17.70 505.10h1 M17.70 513.26h1 M17.70 521.42h1 M17.70 529.58h1 M17.70 537.74h1 M17.70 545.90h1 M99.50 137.90h1 M99.50 146.06h1 M99.50 154.22h1 M99.50 162.38h1 M99.50 170.54h1 M99.50 178.70h1 M99.50 186.86h1 M99.50 195.02h1 M99.50 203.18h1 M99.50 211.34h1 M99.50 219.50h1 M99.50 227.66h1 M99.50 235.82h1 M99.50 243.98h1 M99.50 252.14h1 M99.50 260.30h1 M99.50 268.46h1 M99.50 276.62h1 M99.50 284.78h1 M99.50 292.94h1 M99.50 301.10h1 M99.50 309.26h1 M99.50 317.42h1 M99.50 325.58h1 M99.50 333.74h1 M99.50 341.90h1 M99.50 350.06h1 M99.50 358.22h1 M99.50 366.38h1 M99.50 374.54h1 M99.50 382.70h1 M99.50 390.86h1 M99.50 399.02h1 M99.50 407.18h1 M99.50 415.34h1 M99.50 423.50h1 M99.50 431.66h1 M99.50 439.82h1 M99.50 447.98h1 M99.50 456.14h1 M99.50 464.30h1 M99.50 472.46h1 M99.50 480.62h1 M99.50 488.78h1 M99.50 496.94h1 M99.50 505.10h1 M99.50 513.26h1 M99.50 521.42h1 M99.50 529.58h1 M99.50 537.74h1 M99.50 545.90h1 M181.30 137.90h1 M181.30 146.06h1 M181.30 154.22h1 M181.30 162.38h1 M181.30 170.54h1 M181.30 178.70h1 M181.30 186.86h1 M181.30 195.02h1 M181.30 203.18h1 M181.30 211.34h1 M181.30 219.50h1 M181.30 227.66h1 M181.30 235.82h1 M181.30 243.98h1 M181.30 252.14h1 M181.30 260.30h1 M181.30 268.46h1 M181.30 276.62h1 M181.30 284.78h1 M181.30 292.94h1 M181.30 301.10h1 M181.30 309.26h1 M181.30 317.42h1 M181.30 325.58h1 M181.30 333.74h1 M181.30 341.90h1 M181.30 350.06h1 M181.30 358.22h1 M181.30 366.38h1 M181.30 374.54h1 M181.30 382.70h1 M181.30 390.86h1 M181.30 399.02h1 M181.30 407.18h1 M181.30 415.34h1 M181.30 423.50h1 M181.30 431.66h1 M181.30 439.82h1 M181.30 447.98h1 M181.30 456.14h1 M181.30 464.30h1 M181.30 472.46h1 M181.30 480.62h1 M181.30 488.78h1 M181.30 496.94h1 M181.30 505.10h1 M181.30 513.26h1 M181.30 521.42h1 M181.30 529.58h1 M181.30 537.74h1 M181.30 545.90h1 M263.10 137.90h1 M263.10 146.06h1 M263.10 154.22h1 M263.10 162.38h1 M263.10 170.54h1 M263.10 178.70h1 M263.10 186.86h1 M263.10 195.02h1 M263.10 203.18h1 M263.10 211.34h1 M263.10 219.50h1 M263.10 227.66h1 M263.10 235.82h1 M263.10 243.98h1 M263.10 252.14h1 M263.10 260.30h1 M263.10 268.46h1 M263.10 276.62h1 M263.10 284.78h1 M263.10 292.94h1 M263.10 301.10h1 M263.10 309.26h1 M263.10 317.42h1 M263.10 325.58h1 M263.10 333.74h1 M263.10 341.90h1 M263.10 350.06h1 M263.10 358.22h1 M263.10 366.38h1 M263.10 374.54h1 M263.10 382.70h1 M263.10 390.86h1 M263.10 399.02h1 M263.10 407.18h1 M263.10 415.34h1 M263.10 423.50h1 M263.10 431.66h1 M263.10 439.82h1 M263.10 447.98h1 M263.10 456.14h1 M263.10 464.30h1 M263.10 472.46h1 M263.10 480.62h1 M263.10 488.78h1 M263.10 496.94h1 M263.10 505.10h1 M263.10 513.26h1 M263.10 521.42h1 M263.10 529.58h1 M263.10 537.74h1 M263.10 545.90h1 M344.90 137.90h1 M344.90 146.06h1 M344.90 154.22h1 M344.90 162.38h1 M344.90 170.54h1 M344.90 178.70h1 M344.90 186.86h1 M344.90 195.02h1 M344.90 203.18h1 M344.90 211.34h1 M344.90 219.50h1 M344.90 227.66h1 M344.90 235.82h1 M344.90 243.98h1 M344.90 252.14h1 M344.90 260.30h1 M344.90 268.46h1 M344.90 276.62h1 M344.90 284.78h1 M344.90 292.94h1 M344.90 301.10h1 M344.90 309.26h1 M344.90 317.42h1 M344.90 325.58h1 M344.90 333.74h1 M344.90 341.90h1 M344.90 350.06h1 M344.90 358.22h1 M344.90 366.38h1 M344.90 374.54h1 M344.90 382.70h1 M344.90 390.86h1 M344.90 399.02h1 M344.90 407.18h1 M344.90 415.34h1 M344.90 423.50h1 M344.90 431.66h1 M344.90 439.82h1 M344.90 447.98h1 M344.90 456.14h1 M344.90 464.30h1 M344.90 472.46h1 M344.90 480.62h1 M344.90 488.78h1 M344.90 496.94h1 M344.90 505.10h1 M344.90 513.26h1 M344.90 521.42h1 M344.90 529.58h1 M344.90 537.74h1 M344.90 545.90h1 M426.70 137.90h1 M426.70 146.06h1 M426.70 154.22h1 M426.70 162.38h1 M426.70 170.54h1 M426.70 178.70h1 M426.70 186.86h1 M426.70 195.02h1 M426.70 203.18h1 M426.70 211.34h1 M426.70 219.50h1 M426.70 227.66h1 M426.70 235.82h1 M426.70 243.98h1 M426.70 252.14h1 M426.70 260.30h1 M426.70 268.46h1 M426.70 276.62h1 M426.70 284.78h1 M426.70 292.94h1 M426.70 301.10h1 M426.70 309.26h1 M426.70 317.42h1 M426.70 325.58h1 M426.70 333.74h1 M426.70 341.90h1 M426.70 350.06h1 M426.70 358.22h1 M426.70 366.38h1 M426.70 374.54h1 M426.70 382.70h1 M426.70 390.86h1 M426.70 399.02h1 M426.70 407.18h1 M426.70 415.34h1 M426.70 423.50h1 M426.70 431.66h1 M426.70 439.82h1 M426.70 447.98h1 M426.70 456.14h1 M426.70 464.30h1 M426.70 472.46h1 M426.70 480.62h1 M426.70 488.78h1 M426.70 496.94h1 M426.70 505.10h1 M426.70 513.26h1 M426.70 521.42h1 M426.70 529.58h1 M426.70 537.74h1 M426.70 545.90h1 M508.50 137.90h1 M508.50 146.06h1 M508.50 154.22h1 M508.50 162.38h1 M508.50 170.54h1 M508.50 178.70h1 M508.50 186.86h1 M508.50 195.02h1 M508.50 203.18h1 M508.50 211.34h1 M508.50 219.50h1 M508.50 227.66h1 M508.50 235.82h1 M508.50 243.98h1 M508.50 252.14h1 M508.50 260.30h1 M508.50 268.46h1 M508.50 276.62h1 M508.50 284.78h1 M508.50 292.94h1 M508.50 301.10h1 M508.50 309.26h1 M508.50 317.42h1 M508.50 325.58h1 M508.50 333.74h1 M508.50 341.90h1 M508.50 350.06h1 M508.50 358.22h1 M508.50 366.38h1 M508.50 374.54h1 M508.50 382.70h1 M508.50 390.86h1 M508.50 399.02h1 M508.50 407.18h1 M508.50 415.34h1 M508.50 423.50h1 M508.50 431.66h1 M508.50 439.82h1 M508.50 447.98h1 M508.50 456.14h1 M508.50 464.30h1 M508.50 472.46h1 M508.50 480.62h1 M508.50 488.78h1 M508.50 496.94h1 M508.50 505.10h1 M508.50 513.26h1 M508.50 521.42h1 M508.50 529.58h1 M508.50 537.74h1 M508.50 545.90h1 M590.30 137.90h1 M590.30 146.06h1 M590.30 154.22h1 M590.30 162.38h1 M590.30 170.54h1 M590.30 178.70h1 M590.30 186.86h1 M590.30 195.02h1 M590.30 203.18h1 M590.30 211.34h1 M590.30 219.50h1 M590.30 227.66h1 M590.30 235.82h1 M590.30 243.98h1 M590.30 252.14h1 M590.30 260.30h1 M590.30 268.46h1 M590.30 276.62h1 M590.30 284.78h1 M590.30 292.94h1 M590.30 301.10h1 M590.30 309.26h1 M590.30 317.42h1 M590.30 325.58h1 M590.30 333.74h1 M590.30 341.90h1 M590.30 350.06h1 M590.30 358.22h1 M590.30 366.38h1 M590.30 374.54h1 M590.30 382.70h1 M590.30 390.86h1 M590.30 399.02h1 M590.30 407.18h1 M590.30 415.34h1 M590.30 423.50h1 M590.30 431.66h1 M590.30 439.82h1 M590.30 447.98h1 M590.30 456.14h1 M590.30 464.30h1 M590.30 472.46h1 M590.30 480.62h1 M590.30 488.78h1 M590.30 496.94h1 M590.30 505.10h1 M590.30 513.26h1 M590.30 521.42h1 M590.30 529.58h1 M590.30 537.74h1 M590.30 545.90h1 M672.10 137.90h1 M672.10 146.06h1 M672.10 154.22h1 M672.10 162.38h1 M672.10 170.54h1 M672.10 178.70h1 M672.10 186.86h1 M672.10 195.02h1 M672.10 203.18h1 M672.10 211.34h1 M672.10 219.50h1 M672.10 227.66h1 M672.10 235.82h1 M672.10 243.98h1 M672.10 252.14h1 M672.10 260.30h1 M672.10 268.46h1 M672.10 276.62h1 M672.10 284.78h1 M672.10 292.94h1 M672.10 301.10h1 M672.10 309.26h1 M672.10 317.42h1 M672.10 325.58h1 M672.10 333.74h1 M672.10 341.90h1 M672.10 350.06h1 M672.10 358.22h1 M672.10 366.38h1 M672.10 374.54h1 M672.10 382.70h1 M672.10 390.86h1 M672.10 399.02h1 M672.10 407.18h1 M672.10 415.34h1 M672.10 423.50h1 M672.10 431.66h1 M672.10 439.82h1 M672.10 447.98h1 M672.10 456.14h1 M672.10 464.30h1 M672.10 472.46h1 M672.10 480.62h1 M672.10 488.78h1 M672.10 496.94h1 M672.10 505.10h1 M672.10 513.26h1 M672.10 521.42h1 M672.10 529.58h1 M672.10 537.74h1 M672.10 545.90h1 M753.90 137.90h1 M753.90 146.06h1 M753.90 154.22h1 M753.90 162.38h1 M753.90 170.54h1 M753.90 178.70h1 M753.90 186.86h1 M753.90 195.02h1 M753.90 203.18h1 M753.90 211.34h1 M753.90 219.50h1 M753.90 227.66h1 M753.90 235.82h1 M753.90 243.98h1 M753.90 252.14h1 M753.90 260.30h1 M753.90 268.46h1 M753.90 276.62h1 M753.90 284.78h1 M753.90 292.94h1 M753.90 301.10h1 M753.90 309.26h1 M753.90 317.42h1 M753.90 325.58h1 M753.90 333.74h1 M753.90 341.90h1 M753.90 350.06h1 M753.90 358.22h1 M753.90 366.38h1 M753.90 374.54h1 M753.90 382.70h1 M753.90 390.86h1 M753.90 399.02h1 M753.90 407.18h1 M753.90 415.34h1 M753.90 423.50h1 M753.90 431.66h1 M753.90 439.82h1 M753.90 447.98h1 M753.90 456.14h1 M753.90 464.30h1 M753.90 472.46h1 M753.90 480.62h1 M753.90 488.78h1 M753.90 496.94h1 M753.90 505.10h1 M753.90 513.26h1 M753.90 521.42h1 M753.90 529.58h1 M753.90 537.74h1 M753.90 545.90h1 M835.70 137.90h1 M835.70 146.06h1 M835.70 154.22h1 M835.70 162.38h1 M835.70 170.54h1 M835.70 178.70h1 M835.70 186.86h1 M835.70 195.02h1 M835.70 203.18h1 M835.70 211.34h1 M835.70 219.50h1 M835.70 227.66h1 M835.70 235.82h1 M835.70 243.98h1 M835.70 252.14h1 M835.70 260.30h1 M835.70 268.46h1 M835.70 276.62h1 M835.70 284.78h1 M835.70 292.94h1 M835.70 301.10h1 M835.70 309.26h1 M835.70 317.42h1 M835.70 325.58h1 M835.70 333.74h1 M835.70 341.90h1 M835.70 350.06h1 M835.70 358.22h1 M835.70 366.38h1 M835.70 374.54h1 M835.70 382.70h1 M835.70 390.86h1 M835.70 399.02h1 M835.70 407.18h1 M835.70 415.34h1 M835.70 423.50h1 M835.70 431.66h1 M835.70 439.82h1 M835.70 447.98h1 M835.70 456.14h1 M835.70 464.30h1 M835.70 472.46h1 M835.70 480.62h1 M835.70 488.78h1 M835.70 496.94h1 M835.70 505.10h1 M835.70 513.26h1 M835.70 521.42h1 M835.70 529.58h1 M835.70 537.74h1 M835.70 545.90h1 M17.70 137.90h1 M34.06 137.90h1 M50.42 137.90h1 M66.78 137.90h1 M83.14 137.90h1 M99.50 137.90h1 M115.86 137.90h1 M132.22 137.90h1 M148.58 137.90h1 M164.94 137.90h1 M181.30 137.90h1 M197.66 137.90h1 M214.02 137.90h1 M230.38 137.90h1 M246.74 137.90h1 M263.10 137.90h1 M279.46 137.90h1 M295.82 137.90h1 M312.18 137.90h1 M328.54 137.90h1 M344.90 137.90h1 M361.26 137.90h1 M377.62 137.90h1 M393.98 137.90h1 M410.34 137.90h1 M426.70 137.90h1 M443.06 137.90h1 M459.42 137.90h1 M475.78 137.90h1 M492.14 137.90h1 M508.50 137.90h1 M524.86 137.90h1 M541.22 137.90h1 M557.58 137.90h1 M573.94 137.90h1 M590.30 137.90h1 M606.66 137.90h1 M623.02 137.90h1 M639.38 137.90h1 M655.74 137.90h1 M672.10 137.90h1 M688.46 137.90h1 M704.82 137.90h1 M721.18 137.90h1 M737.54 137.90h1 M753.90 137.90h1 M770.26 137.90h1 M786.62 137.90h1 M802.98 137.90h1 M819.34 137.90h1 M835.70 137.90h1 M17.70 178.70h1 M34.06 178.70h1 M50.42 178.70h1 M66.78 178.70h1 M83.14 178.70h1 M99.50 178.70h1 M115.86 178.70h1 M132.22 178.70h1 M148.58 178.70h1 M164.94 178.70h1 M181.30 178.70h1 M197.66 178.70h1 M214.02 178.70h1 M230.38 178.70h1 M246.74 178.70h1 M263.10 178.70h1 M279.46 178.70h1 M295.82 178.70h1 M312.18 178.70h1 M328.54 178.70h1 M344.90 178.70h1 M361.26 178.70h1 M377.62 178.70h1 M393.98 178.70h1 M410.34 178.70h1 M426.70 178.70h1 M443.06 178.70h1 M459.42 178.70h1 M475.78 178.70h1 M492.14 178.70h1 M508.50 178.70h1 M524.86 178.70h1 M541.22 178.70h1 M557.58 178.70h1 M573.94 178.70h1 M590.30 178.70h1 M606.66 178.70h1 M623.02 178.70h1 M639.38 178.70h1 M655.74 178.70h1 M672.10 178.70h1 M688.46 178.70h1 M704.82 178.70h1 M721.18 178.70h1 M737.54 178.70h1 M753.90 178.70h1 M770.26 178.70h1 M786.62 178.70h1 M802.98 178.70h1 M819.34 178.70h1 M835.70 178.70h1 M17.70 219.50h1 M34.06 219.50h1 M50.42 219.50h1 M66.78 219.50h1 M83.14 219.50h1 M99.50 219.50h1 M115.86 219.50h1 M132.22 219.50h1 M148.58 219.50h1 M164.94 219.50h1 M181.30 219.50h1 M197.66 219.50h1 M214.02 219.50h1 M230.38 219.50h1 M246.74 219.50h1 M263.10 219.50h1 M279.46 219.50h1 M295.82 219.50h1 M312.18 219.50h1 M328.54 219.50h1 M344.90 219.50h1 M361.26 219.50h1 M377.62 219.50h1 M393.98 219.50h1 M410.34 219.50h1 M426.70 219.50h1 M443.06 219.50h1 M459.42 219.50h1 M475.78 219.50h1 M492.14 219.50h1 M508.50 219.50h1 M524.86 219.50h1 M541.22 219.50h1 M557.58 219.50h1 M573.94 219.50h1 M590.30 219.50h1 M606.66 219.50h1 M623.02 219.50h1 M639.38 219.50h1 M655.74 219.50h1 M672.10 219.50h1 M688.46 219.50h1 M704.82 219.50h1 M721.18 219.50h1 M737.54 219.50h1 M753.90 219.50h1 M770.26 219.50h1 M786.62 219.50h1 M802.98 219.50h1 M819.34 219.50h1 M835.70 219.50h1 M17.70 260.30h1 M34.06 260.30h1 M50.42 260.30h1 M66.78 260.30h1 M83.14 260.30h1 M99.50 260.30h1 M115.86 260.30h1 M132.22 260.30h1 M148.58 260.30h1 M164.94 260.30h1 M181.30 260.30h1 M197.66 260.30h1 M214.02 260.30h1 M230.38 260.30h1 M246.74 260.30h1 M263.10 260.30h1 M279.46 260.30h1 M295.82 260.30h1 M312.18 260.30h1 M328.54 260.30h1 M344.90 260.30h1 M361.26 260.30h1 M377.62 260.30h1 M393.98 260.30h1 M410.34 260.30h1 M426.70 260.30h1 M443.06 260.30h1 M459.42 260.30h1 M475.78 260.30h1 M492.14 260.30h1 M508.50 260.30h1 M524.86 260.30h1 M541.22 260.30h1 M557.58 260.30h1 M573.94 260.30h1 M590.30 260.30h1 M606.66 260.30h1 M623.02 260.30h1 M639.38 260.30h1 M655.74 260.30h1 M672.10 260.30h1 M688.46 260.30h1 M704.82 260.30h1 M721.18 260.30h1 M737.54 260.30h1 M753.90 260.30h1 M770.26 260.30h1 M786.62 260.30h1 M802.98 260.30h1 M819.34 260.30h1 M835.70 260.30h1 M17.70 301.10h1 M34.06 301.10h1 M50.42 301.10h1 M66.78 301.10h1 M83.14 301.10h1 M99.50 301.10h1 M115.86 301.10h1 M132.22 301.10h1 M148.58 301.10h1 M164.94 301.10h1 M181.30 301.10h1 M197.66 301.10h1 M214.02 301.10h1 M230.38 301.10h1 M246.74 301.10h1 M263.10 301.10h1 M279.46 301.10h1 M295.82 301.10h1 M312.18 301.10h1 M328.54 301.10h1 M344.90 301.10h1 M361.26 301.10h1 M377.62 301.10h1 M393.98 301.10h1 M410.34 301.10h1 M426.70 301.10h1 M443.06 301.10h1 M459.42 301.10h1 M475.78 301.10h1 M492.14 301.10h1 M508.50 301.10h1 M524.86 301.10h1 M541.22 301.10h1 M557.58 301.10h1 M573.94 301.10h1 M590.30 301.10h1 M606.66 301.10h1 M623.02 301.10h1 M639.38 301.10h1 M655.74 301.10h1 M672.10 301.10h1 M688.46 301.10h1 M704.82 301.10h1 M721.18 301.10h1 M737.54 301.10h1 M753.90 301.10h1 M770.26 301.10h1 M786.62 301.10h1 M802.98 301.10h1 M819.34 301.10h1 M835.70 301.10h1 M17.70 341.90h1 M34.06 341.90h1 M50.42 341.90h1 M66.78 341.90h1 M83.14 341.90h1 M99.50 341.90h1 M115.86 341.90h1 M132.22 341.90h1 M148.58 341.90h1 M164.94 341.90h1 M181.30 341.90h1 M197.66 341.90h1 M214.02 341.90h1 M230.38 341.90h1 M246.74 341.90h1 M263.10 341.90h1 M279.46 341.90h1 M295.82 341.90h1 M312.18 341.90h1 M328.54 341.90h1 M344.90 341.90h1 M361.26 341.90h1 M377.62 341.90h1 M393.98 341.90h1 M410.34 341.90h1 M426.70 341.90h1 M443.06 341.90h1 M459.42 341.90h1 M475.78 341.90h1 M492.14 341.90h1 M508.50 341.90h1 M524.86 341.90h1 M541.22 341.90h1 M557.58 341.90h1 M573.94 341.90h1 M590.30 341.90h1 M606.66 341.90h1 M623.02 341.90h1 M639.38 341.90h1 M655.74 341.90h1 M672.10 341.90h1 M688.46 341.90h1 M704.82 341.90h1 M721.18 341.90h1 M737.54 341.90h1 M753.90 341.90h1 M770.26 341.90h1 M786.62 341.90h1 M802.98 341.90h1 M819.34 341.90h1 M835.70 341.90h1 M17.70 382.70h1 M34.06 382.70h1 M50.42 382.70h1 M66.78 382.70h1 M83.14 382.70h1 M99.50 382.70h1 M115.86 382.70h1 M132.22 382.70h1 M148.58 382.70h1 M164.94 382.70h1 M181.30 382.70h1 M197.66 382.70h1 M214.02 382.70h1 M230.38 382.70h1 M246.74 382.70h1 M263.10 382.70h1 M279.46 382.70h1 M295.82 382.70h1 M312.18 382.70h1 M328.54 382.70h1 M344.90 382.70h1 M361.26 382.70h1 M377.62 382.70h1 M393.98 382.70h1 M410.34 382.70h1 M426.70 382.70h1 M443.06 382.70h1 M459.42 382.70h1 M475.78 382.70h1 M492.14 382.70h1 M508.50 382.70h1 M524.86 382.70h1 M541.22 382.70h1 M557.58 382.70h1 M573.94 382.70h1 M590.30 382.70h1 M606.66 382.70h1 M623.02 382.70h1 M639.38 382.70h1 M655.74 382.70h1 M672.10 382.70h1 M688.46 382.70h1 M704.82 382.70h1 M721.18 382.70h1 M737.54 382.70h1 M753.90 382.70h1 M770.26 382.70h1 M786.62 382.70h1 M802.98 382.70h1 M819.34 382.70h1 M835.70 382.70h1 M17.70 423.50h1 M34.06 423.50h1 M50.42 423.50h1 M66.78 423.50h1 M83.14 423.50h1 M99.50 423.50h1 M115.86 423.50h1 M132.22 423.50h1 M148.58 423.50h1 M164.94 423.50h1 M181.30 423.50h1 M197.66 423.50h1 M214.02 423.50h1 M230.38 423.50h1 M246.74 423.50h1 M263.10 423.50h1 M279.46 423.50h1 M295.82 423.50h1 M312.18 423.50h1 M328.54 423.50h1 M344.90 423.50h1 M361.26 423.50h1 M377.62 423.50h1 M393.98 423.50h1 M410.34 423.50h1 M426.70 423.50h1 M443.06 423.50h1 M459.42 423.50h1 M475.78 423.50h1 M492.14 423.50h1 M508.50 423.50h1 M524.86 423.50h1 M541.22 423.50h1 M557.58 423.50h1 M573.94 423.50h1 M590.30 423.50h1 M606.66 423.50h1 M623.02 423.50h1 M639.38 423.50h1 M655.74 423.50h1 M672.10 423.50h1 M688.46 423.50h1 M704.82 423.50h1 M721.18 423.50h1 M737.54 423.50h1 M753.90 423.50h1 M770.26 423.50h1 M786.62 423.50h1 M802.98 423.50h1 M819.34 423.50h1 M835.70 423.50h1 M17.70 464.30h1 M34.06 464.30h1 M50.42 464.30h1 M66.78 464.30h1 M83.14 464.30h1 M99.50 464.30h1 M115.86 464.30h1 M132.22 464.30h1 M148.58 464.30h1 M164.94 464.30h1 M181.30 464.30h1 M197.66 464.30h1 M214.02 464.30h1 M230.38 464.30h1 M246.74 464.30h1 M263.10 464.30h1 M279.46 464.30h1 M295.82 464.30h1 M312.18 464.30h1 M328.54 464.30h1 M344.90 464.30h1 M361.26 464.30h1 M377.62 464.30h1 M393.98 464.30h1 M410.34 464.30h1 M426.70 464.30h1 M443.06 464.30h1 M459.42 464.30h1 M475.78 464.30h1 M492.14 464.30h1 M508.50 464.30h1 M524.86 464.30h1 M541.22 464.30h1 M557.58 464.30h1 M573.94 464.30h1 M590.30 464.30h1 M606.66 464.30h1 M623.02 464.30h1 M639.38 464.30h1 M655.74 464.30h1 M672.10 464.30h1 M688.46 464.30h1 M704.82 464.30h1 M721.18 464.30h1 M737.54 464.30h1 M753.90 464.30h1 M770.26 464.30h1 M786.62 464.30h1 M802.98 464.30h1 M819.34 464.30h1 M835.70 464.30h1 M17.70 505.10h1 M34.06 505.10h1 M50.42 505.10h1 M66.78 505.10h1 M83.14 505.10h1 M99.50 505.10h1 M115.86 505.10h1 M132.22 505.10h1 M148.58 505.10h1 M164.94 505.10h1 M181.30 505.10h1 M197.66 505.10h1 M214.02 505.10h1 M230.38 505.10h1 M246.74 505.10h1 M263.10 505.10h1 M279.46 505.10h1 M295.82 505.10h1 M312.18 505.10h1 M328.54 505.10h1 M344.90 505.10h1 M361.26 505.10h1 M377.62 505.10h1 M393.98 505.10h1 M410.34 505.10h1 M426.70 505.10h1 M443.06 505.10h1 M459.42 505.10h1 M475.78 505.10h1 M492.14 505.10h1 M508.50 505.10h1 M524.86 505.10h1 M541.22 505.10h1 M557.58 505.10h1 M573.94 505.10h1 M590.30 505.10h1 M606.66 505.10h1 M623.02 505.10h1 M639.38 505.10h1 M655.74 505.10h1 M672.10 505.10h1 M688.46 505.10h1 M704.82 505.10h1 M721.18 505.10h1 M737.54 505.10h1 M753.90 505.10h1 M770.26 505.10h1 M786.62 505.10h1 M802.98 505.10h1 M819.34 505.10h1 M835.70 505.10h1 M17.70 545.90h1 M34.06 545.90h1 M50.42 545.90h1 M66.78 545.90h1 M83.14 545.90h1 M99.50 545.90h1 M115.86 545.90h1 M132.22 545.90h1 M148.58 545.90h1 M164.94 545.90h1 M181.30 545.90h1 M197.66 545.90h1 M214.02 545.90h1 M230.38 545.90h1 M246.74 545.90h1 M263.10 545.90h1 M279.46 545.90h1 M295.82 545.90h1 M312.18 545.90h1 M328.54 545.90h1 M344.90 545.90h1 M361.26 545.90h1 M377.62 545.90h1 M393.98 545.90h1 M410.34 545.90h1 M426.70 545.90h1 M443.06 545.90h1 M459.42 545.90h1 M475.78 545.90h1 M492.14 545.90h1 M508.50 545.90h1 M524.86 545.90h1 M541.22 545.90h1 M557.58 545.90h1 M573.94 545.90h1 M590.30 545.90h1 M606.66 545.90h1 M623.02 545.90h1 M639.38 545.90h1 M655.74 545.90h1 M672.10 545.90h1 M688.46 545.90h1 M704.82 545.90h1 M721.18 545.90h1 M737.54 545.90h1 M753.90 545.90h1 M770.26 545.90h1 M786.62 545.90h1 M802.98 545.90h1 M819.34 545.90h1 M835.70 545.90h1" stroke="#7c7660" stroke-width="1" fill="none"/>
<path d="M426.70 137.90h1 M426.70 139.90h1 M426.70 141.90h1 M426.70 143.90h1 M426.70 145.90h1 M426.70 147.90h1 M426.70 149.90h1 M426.70 151.90h1 M426.70 153.90h1 M426.70 155.90h1 M426.70 157.90h1 M426.70 159.90h1 M426.70 161.90h1 M426.70 163.90h1 M426.70 165.90h1 M426.70 167.90h1 M426.70 169.90h1 M426.70 171.90h1 M426.70 173.90h1 M426.70 175.90h1 M426.70 177.90h1 M426.70 179.90h1 M426.70 181.90h1 M426.70 183.90h1 M426.70 185.90h1 M426.70 187.90h1 M426.70 189.90h1 M426.70 191.90h1 M426.70 193.90h1 M426.70 195.90h1 M426.70 197.90h1 M426.70 199.90h1 M426.70 201.90h1 M426.70 203.90h1 M426.70 205.90h1 M426.70 207.90h1 M426.70 209.90h1 M426.70 211.90h1 M426.70 213.90h1 M426.70 215.90h1 M426.70 217.90h1 M426.70 219.90h1 M426.70 221.90h1 M426.70 223.90h1 M426.70 225.90h1 M426.70 227.90h1 M426.70 229.90h1 M426.70 231.90h1 M426.70 233.90h1 M426.70 235.90h1 M426.70 237.90h1 M426.70 239.90h1 M426.70 241.90h1 M426.70 243.90h1 M426.70 245.90h1 M426.70 247.90h1 M426.70 249.90h1 M426.70 251.90h1 M426.70 253.90h1 M426.70 255.90h1 M426.70 257.90h1 M426.70 259.90h1 M426.70 261.90h1 M426.70 263.90h1 M426.70 265.90h1 M426.70 267.90h1 M426.70 269.90h1 M426.70 271.90h1 M426.70 273.90h1 M426.70 275.90h1 M426.70 277.90h1 M426.70 279.90h1 M426.70 281.90h1 M426.70 283.90h1 M426.70 285.90h1 M426.70 287.90h1 M426.70 289.90h1 M426.70 291.90h1 M426.70 293.90h1 M426.70 295.90h1 M426.70 297.90h1 M426.70 299.90h1 M426.70 301.90h1 M426.70 303.90h1 M426.70 305.90h1 M426.70 307.90h1 M426.70 309.90h1 M426.70 311.90h1 M426.70 313.90h1 M426.70 315.90h1 M426.70 317.90h1 M426.70 319.90h1 M426.70 321.90h1 M426.70 323.90h1 M426.70 325.90h1 M426.70 327.90h1 M426.70 329.90h1 M426.70 331.90h1 M426.70 333.90h1 M426.70 335.90h1 M426.70 337.90h1 M426.70 339.90h1 M426.70 341.90h1 M426.70 343.90h1 M426.70 345.90h1 M426.70 347.90h1 M426.70 349.90h1 M426.70 351.90h1 M426.70 353.90h1 M426.70 355.90h1 M426.70 357.90h1 M426.70 359.90h1 M426.70 361.90h1 M426.70 363.90h1 M426.70 365.90h1 M426.70 367.90h1 M426.70 369.90h1 M426.70 371.90h1 M426.70 373.90h1 M426.70 375.90h1 M426.70 377.90h1 M426.70 379.90h1 M426.70 381.90h1 M426.70 383.90h1 M426.70 385.90h1 M426.70 387.90h1 M426.70 389.90h1 M426.70 391.90h1 M426.70 393.90h1 M426.70 395.90h1 M426.70 397.90h1 M426.70 399.90h1 M426.70 401.90h1 M426.70 403.90h1 M426.70 405.90h1 M426.70 407.90h1 M426.70 409.90h1 M426.70 411.90h1 M426.70 413.90h1 M426.70 415.90h1 M426.70 417.90h1 M426.70 419.90h1 M426.70 421.90h1 M426.70 423.90h1 M426.70 425.90h1 M426.70 427.90h1 M426.70 429.90h1 M426.70 431.90h1 M426.70 433.90h1 M426.70 435.90h1 M426.70 437.90h1 M426.70 439.90h1 M426.70 441.90h1 M426.70 443.90h1 M426.70 445.90h1 M426.70 447.90h1 M426.70 449.90h1 M426.70 451.90h1 M426.70 453.90h1 M426.70 455.90h1 M426.70 457.90h1 M426.70 459.90h1 M426.70 461.90h1 M426.70 463.90h1 M426.70 465.90h1 M426.70 467.90h1 M426.70 469.90h1 M426.70 471.90h1 M426.70 473.90h1 M426.70 475.90h1 M426.70 477.90h1 M426.70 479.90h1 M426.70 481.90h1 M426.70 483.90h1 M426.70 485.90h1 M426.70 487.90h1 M426.70 489.90h1 M426.70 491.90h1 M426.70 493.90h1 M426.70 495.90h1 M426.70 497.90h1 M426.70 499.90h1 M426.70 501.90h1 M426.70 503.90h1 M426.70 505.90h1 M426.70 507.90h1 M426.70 509.90h1 M426.70 511.90h1 M426.70 513.90h1 M426.70 515.90h1 M426.70 517.90h1 M426.70 519.90h1 M426.70 521.90h1 M426.70 523.90h1 M426.70 525.90h1 M426.70 527.90h1 M426.70 529.90h1 M426.70 531.90h1 M426.70 533.90h1 M426.70 535.90h1 M426.70 537.90h1 M426.70 539.90h1 M426.70 541.90h1 M426.70 543.90h1 M426.70 545.90h1 M18.20 341.40v1 M20.20 341.40v1 M22.20 341.40v1 M24.20 341.40v1 M26.20 341.40v1 M28.20 341.40v1 M30.20 341.40v1 M32.20 341.40v1 M34.20 341.40v1 M36.20 341.40v1 M38.20 341.40v1 M40.20 341.40v1 M42.20 341.40v1 M44.20 341.40v1 M46.20 341.40v1 M48.20 341.40v1 M50.20 341.40v1 M52.20 341.40v1 M54.20 341.40v1 M56.20 341.40v1 M58.20 341.40v1 M60.20 341.40v1 M62.20 341.40v1 M64.20 341.40v1 M66.20 341.40v1 M68.20 341.40v1 M70.20 341.40v1 M72.20 341.40v1 M74.20 341.40v1 M76.20 341.40v1 M78.20 341.40v1 M80.20 341.40v1 M82.20 341.40v1 M84.20 341.40v1 M86.20 341.40v1 M88.20 341.40v1 M90.20 341.40v1 M92.20 341.40v1 M94.20 341.40v1 M96.20 341.40v1 M98.20 341.40v1 M100.20 341.40v1 M102.20 341.40v1 M104.20 341.40v1 M106.20 341.40v1 M108.20 341.40v1 M110.20 341.40v1 M112.20 341.40v1 M114.20 341.40v1 M116.20 341.40v1 M118.20 341.40v1 M120.20 341.40v1 M122.20 341.40v1 M124.20 341.40v1 M126.20 341.40v1 M128.20 341.40v1 M130.20 341.40v1 M132.20 341.40v1 M134.20 341.40v1 M136.20 341.40v1 M138.20 341.40v1 M140.20 341.40v1 M142.20 341.40v1 M144.20 341.40v1 M146.20 341.40v1 M148.20 341.40v1 M150.20 341.40v1 M152.20 341.40v1 M154.20 341.40v1 M156.20 341.40v1 M158.20 341.40v1 M160.20 341.40v1 M162.20 341.40v1 M164.20 341.40v1 M166.20 341.40v1 M168.20 341.40v1 M170.20 341.40v1 M172.20 341.40v1 M174.20 341.40v1 M176.20 341.40v1 M178.20 341.40v1 M180.20 341.40v1 M182.20 341.40v1 M184.20 341.40v1 M186.20 341.40v1 M188.20 341.40v1 M190.20 341.40v1 M192.20 341.40v1 M194.20 341.40v1 M196.20 341.40v1 M198.20 341.40v1 M200.20 341.40v1 M202.20 341.40v1 M204.20 341.40v1 M206.20 341.40v1 M208.20 341.40v1 M210.20 341.40v1 M212.20 341.40v1 M214.20 341.40v1 M216.20 341.40v1 M218.20 341.40v1 M220.20 341.40v1 M222.20 341.40v1 M224.20 341.40v1 M226.20 341.40v1 M228.20 341.40v1 M230.20 341.40v1 M232.20 341.40v1 M234.20 341.40v1 M236.20 341.40v1 M238.20 341.40v1 M240.20 341.40v1 M242.20 341.40v1 M244.20 341.40v1 M246.20 341.40v1 M248.20 341.40v1 M250.20 341.40v1 M252.20 341.40v1 M254.20 341.40v1 M256.20 341.40v1 M258.20 341.40v1 M260.20 341.40v1 M262.20 341.40v1 M264.20 341.40v1 M266.20 341.40v1 M268.20 341.40v1 M270.20 341.40v1 M272.20 341.40v1 M274.20 341.40v1 M276.20 341.40v1 M278.20 341.40v1 M280.20 341.40v1 M282.20 341.40v1 M284.20 341.40v1 M286.20 341.40v1 M288.20 341.40v1 M290.20 341.40v1 M292.20 341.40v1 M294.20 341.40v1 M296.20 341.40v1 M298.20 341.40v1 M300.20 341.40v1 M302.20 341.40v1 M304.20 341.40v1 M306.20 341.40v1 M308.20 341.40v1 M310.20 341.40v1 M312.20 341.40v1 M314.20 341.40v1 M316.20 341.40v1 M318.20 341.40v1 M320.20 341.40v1 M322.20 341.40v1 M324.20 341.40v1 M326.20 341.40v1 M328.20 341.40v1 M330.20 341.40v1 M332.20 341.40v1 M334.20 341.40v1 M336.20 341.40v1 M338.20 341.40v1 M340.20 341.40v1 M342.20 341.40v1 M344.20 341.40v1 M346.20 341.40v1 M348.20 341.40v1 M350.20 341.40v1 M352.20 341.40v1 M354.20 341.40v1 M356.20 341.40v1 M358.20 341.40v1 M360.20 341.40v1 M362.20 341.40v1 M364.20 341.40v1 M366.20 341.40v1 M368.20 341.40v1 M370.20 341.40v1 M372.20 341.40v1 M374.20 341.40v1 M376.20 341.40v1 M378.20 341.40v1 M380.20 341.40v1 M382.20 341.40v1 M384.20 341.40v1 M386.20 341.40v1 M388.20 341.40v1 M390.20 341.40v1 M392.20 341.40v1 M394.20 341.40v1 M396.20 341.40v1 M398.20 341.40v1 M400.20 341.40v1 M402.20 341.40v1 M404.20 341.40v1 M406.20 341.40v1 M408.20 341.40v1 M410.20 341.40v1 M412.20 341.40v1 M414.20 341.40v1 M416.20 341.40v1 M418.20 341.40v1 M420.20 341.40v1 M422.20 341.40v1 M424.20 341.40v1 M426.20 341.40v1 M428.20 341.40v1 M430.20 341.40v1 M432.20 341.40v1 M434.20 341.40v1 M436.20 341.40v1 M438.20 341.40v1 M440.20 341.40v1 M442.20 341.40v1 M444.20 341.40v1 M446.20 341.40v1 M448.20 341.40v1 M450.20 341.40v1 M452.20 341.40v1 M454.20 341.40v1 M456.20 341.40v1 M458.20 341.40v1 M460.20 341.40v1 M462.20 341.40v1 M464.20 341.40v1 M466.20 341.40v1 M468.20 341.40v1 M470.20 341.40v1 M472.20 341.40v1 M474.20 341.40v1 M476.20 341.40v1 M478.20 341.40v1 M480.20 341.40v1 M482.20 341.40v1 M484.20 341.40v1 M486.20 341.40v1 M488.20 341.40v1 M490.20 341.40v1 M492.20 341.40v1 M494.20 341.40v1 M496.20 341.40v1 M498.20 341.40v1 M500.20 341.40v1 M502.20 341.40v1 M504.20 341.40v1 M506.20 341.40v1 M508.20 341.40v1 M510.20 341.40v1 M512.20 341.40v1 M514.20 341.40v1 M516.20 341.40v1 M518.20 341.40v1 M520.20 341.40v1 M522.20 341.40v1 M524.20 341.40v1 M526.20 341.40v1 M528.20 341.40v1 M530.20 341.40v1 M532.20 341.40v1 M534.20 341.40v1 M536.20 341.40v1 M538.20 341.40v1 M540.20 341.40v1 M542.20 341.40v1 M544.20 341.40v1 M546.20 341.40v1 M548.20 341.40v1 M550.20 341.40v1 M552.20 341.40v1 M554.20 341.40v1 M556.20 341.40v1 M558.20 341.40v1 M560.20 341.40v1 M562.20 341.40v1 M564.20 341.40v1 M566.20 341.40v1 M568.20 341.40v1 M570.20 341.40v1 M572.20 341.40v1 M574.20 341.40v1 M576.20 341.40v1 M578.20 341.40v1 M580.20 341.40v1 M582.20 341.40v1 M584.20 341.40v1 M586.20 341.40v1 M588.20 341.40v1 M590.20 341.40v1 M592.20 341.40v1 M594.20 341.40v1 M596.20 341.40v1 M598.20 341.40v1 M600.20 341.40v1 M602.20 341.40v1 M604.20 341.40v1 M606.20 341.40v1 M608.20 341.40v1 M610.20 341.40v1 M612.20 341.40v1 M614.20 341.40v1 M616.20 341.40v1 M618.20 341.40v1 M620.20 341.40v1 M622.20 341.40v1 M624.20 341.40v1 M626.20 341.40v1 M628.20 341.40v1 M630.20 341.40v1 M632.20 341.40v1 M634.20 341.40v1 M636.20 341.40v1 M638.20 341.40v1 M640.20 341.40v1 M642.20 341.40v1 M644.20 341.40v1 M646.20 341.40v1 M648.20 341.40v1 M650.20 341.40v1 M652.20 341.40v1 M654.20 341.40v1 M656.20 341.40v1 M658.20 341.40v1 M660.20 341.40v1 M662.20 341.40v1 M664.20 341.40v1 M666.20 341.40v1 M668.20 341.40v1 M670.20 341.40v1 M672.20 341.40v1 M674.20 341.40v1 M676.20 341.40v1 M678.20 341.40v1 M680.20 341.40v1 M682.20 341.40v1 M684.20 341.40v1 M686.20 341.40v1 M688.20 341.40v1 M690.20 341.40v1 M692.20 341.40v1 M694.20 341.40v1 M696.20 341.40v1 M698.20 341.40v1 M700.20 341.40v1 M702.20 341.40v1 M704.20 341.40v1 M706.20 341.40v1 M708.20 341.40v1 M710.20 341.40v1 M712.20 341.40v1 M714.20 341.40v1 M716.20 341.40v1 M718.20 341.40v1 M720.20 341.40v1 M722.20 341.40v1 M724.20 341.40v1 M726.20 341.40v1 M728.20 341.40v1 M730.20 341.40v1 M732.20 341.40v1 M734.20 341.40v1 M736.20 341.40v1 M738.20 341.40v1 M740.20 341.40v1 M742.20 341.40v1 M744.20 341.40v1 M746.20 341.40v1 M748.20 341.40v1 M750.20 341.40v1 M752.20 341.40v1 M754.20 341.40v1 M756.20 341.40v1 M758.20 341.40v1 M760.20 341.40v1 M762.20 341.40v1 M764.20 341.40v1 M766.20 341.40v1 M768.20 341.40v1 M770.20 341.40v1 M772.20 341.40v1 M774.20 341.40v1 M776.20 341.40v1 M778.20 341.40v1 M780.20 341.40v1 M782.20 341.40v1 M784.20 341.40v1 M786.20 341.40v1 M788.20 341.40v1 M790.20 341.40v1 M792.20 341.40v1 M794.20 341.40v1 M796.20 341.40v1 M798.20 341.40v1 M800.20 341.40v1 M802.20 341.40v1 M804.20 341.40v1 M806.20 341.40v1 M808.20 341.40v1 M810.20 341.40v1 M812.20 341.40v1 M814.20 341.40v1 M816.20 341.40v1 M818.20 341.40v1 M820.20 341.40v1 M822.20 341.40v1 M824.20 341.40v1 M826.20 341.40v1 M828.20 341.40v1 M830.20 341.40v1 M832.20 341.40v1 M834.20 341.40v1 M836.20 341.40v1 M424.70 137.90h5 M424.70 146.06h5 M424.70 154.22h5 M424.70 162.38h5 M424.70 170.54h5 M424.70 178.70h5 M424.70 186.86h5 M424.70 195.02h5 M424.70 203.18h5 M424.70 211.34h5 M424.70 219.50h5 M424.70 227.66h5 M424.70 235.82h5 M424.70 243.98h5 M424.70 252.14h5 M424.70 260.30h5 M424.70 268.46h5 M424.70 276.62h5 M424.70 284.78h5 M424.70 292.94h5 M424.70 301.10h5 M424.70 309.26h5 M424.70 317.42h5 M424.70 325.58h5 M424.70 333.74h5 M424.70 341.90h5 M424.70 350.06h5 M424.70 358.22h5 M424.70 366.38h5 M424.70 374.54h5 M424.70 382.70h5 M424.70 390.86h5 M424.70 399.02h5 M424.70 407.18h5 M424.70 415.34h5 M424.70 423.50h5 M424.70 431.66h5 M424.70 439.82h5 M424.70 447.98h5 M424.70 456.14h5 M424.70 464.30h5 M424.70 472.46h5 M424.70 480.62h5 M424.70 488.78h5 M424.70 496.94h5 M424.70 505.10h5 M424.70 513.26h5 M424.70 521.42h5 M424.70 529.58h5 M424.70 537.74h5 M424.70 545.90h5 M18.20 339.40v5 M34.56 339.40v5 M50.92 339.40v5 M67.28 339.40v5 M83.64 339.40v5 M100.00 339.40v5 M116.36 339.40v5 M132.72 339.40v5 M149.08 339.40v5 M165.44 339.40v5 M181.80 339.40v5 M198.16 339.40v5 M214.52 339.40v5 M230.88 339.40v5 M247.24 339.40v5 M263.60 339.40v5 M279.96 339.40v5 M296.32 339.40v5 M312.68 339.40v5 M329.04 339.40v5 M345.40 339.40v5 M361.76 339.40v5 M378.12 339.40v5 M394.48 339.40v5 M410.84 339.40v5 M427.20 339.40v5 M443.56 339.40v5 M459.92 339.40v5 M476.28 339.40v5 M492.64 339.40v5 M509.00 339.40v5 M525.36 339.40v5 M541.72 339.40v5 M558.08 339.40v5 M574.44 339.40v5 M590.80 339.40v5 M607.16 339.40v5 M623.52 339.40v5 M639.88 339.40v5 M656.24 339.40v5 M672.60 339.40v5 M688.96 339.40v5 M705.32 339.40v5 M721.68 339.40v5 M738.04 339.40v5 M754.40 339.40v5 M770.76 339.40v5 M787.12 339.40v5 M803.48 339.40v5 M819.84 339.40v5 M836.20 339.40v5" stroke="#7c7660" stroke-width="0.9" fill="none"/>
<path d="M19.70 137.40h1 M833.70 137.40h1 M19.70 145.56h1 M833.70 145.56h1 M19.70 153.72h1 M833.70 153.72h1 M19.70 161.88h1 M833.70 161.88h1 M19.70 170.04h1 M833.70 170.04h1 M19.70 178.20h1 M833.70 178.20h1 M19.70 186.36h1 M833.70 186.36h1 M19.70 194.52h1 M833.70 194.52h1 M19.70 202.68h1 M833.70 202.68h1 M19.70 210.84h1 M833.70 210.84h1 M19.70 219.00h1 M833.70 219.00h1 M19.70 227.16h1 M833.70 227.16h1 M19.70 235.32h1 M833.70 235.32h1 M19.70 243.48h1 M833.70 243.48h1 M19.70 251.64h1 M833.70 251.64h1 M19.70 259.80h1 M833.70 259.80h1 M19.70 267.96h1 M833.70 267.96h1 M19.70 276.12h1 M833.70 276.12h1 M19.70 284.28h1 M833.70 284.28h1 M19.70 292.44h1 M833.70 292.44h1 M19.70 300.60h1 M833.70 300.60h1 M19.70 308.76h1 M833.70 308.76h1 M19.70 316.92h1 M833.70 316.92h1 M19.70 325.08h1 M833.70 325.08h1 M19.70 333.24h1 M833.70 333.24h1 M19.70 341.40h1 M833.70 341.40h1 M19.70 349.56h1 M833.70 349.56h1 M19.70 357.72h1 M833.70 357.72h1 M19.70 365.88h1 M833.70 365.88h1 M19.70 374.04h1 M833.70 374.04h1 M19.70 382.20h1 M833.70 382.20h1 M19.70 390.36h1 M833.70 390.36h1 M19.70 398.52h1 M833.70 398.52h1 M19.70 406.68h1 M833.70 406.68h1 M19.70 414.84h1 M833.70 414.84h1 M19.70 423.00h1 M833.70 423.00h1 M19.70 431.16h1 M833.70 431.16h1 M19.70 439.32h1 M833.70 439.32h1 M19.70 447.48h1 M833.70 447.48h1 M19.70 455.64h1 M833.70 455.64h1 M19.70 463.80h1 M833.70 463.80h1 M19.70 471.96h1 M833.70 471.96h1 M19.70 480.12h1 M833.70 480.12h1 M19.70 488.28h1 M833.70 488.28h1 M19.70 496.44h1 M833.70 496.44h1 M19.70 504.60h1 M833.70 504.60h1 M19.70 512.76h1 M833.70 512.76h1 M19.70 520.92h1 M833.70 520.92h1 M19.70 529.08h1 M833.70 529.08h1 M19.70 537.24h1 M833.70 537.24h1 M19.70 545.40h1 M833.70 545.40h1 M17.70 139.40h1 M17.70 543.40h1 M34.06 139.40h1 M34.06 543.40h1 M50.42 139.40h1 M50.42 543.40h1 M66.78 139.40h1 M66.78 543.40h1 M83.14 139.40h1 M83.14 543.40h1 M99.50 139.40h1 M99.50 543.40h1 M115.86 139.40h1 M115.86 543.40h1 M132.22 139.40h1 M132.22 543.40h1 M148.58 139.40h1 M148.58 543.40h1 M164.94 139.40h1 M164.94 543.40h1 M181.30 139.40h1 M181.30 543.40h1 M197.66 139.40h1 M197.66 543.40h1 M214.02 139.40h1 M214.02 543.40h1 M230.38 139.40h1 M230.38 543.40h1 M246.74 139.40h1 M246.74 543.40h1 M263.10 139.40h1 M263.10 543.40h1 M279.46 139.40h1 M279.46 543.40h1 M295.82 139.40h1 M295.82 543.40h1 M312.18 139.40h1 M312.18 543.40h1 M328.54 139.40h1 M328.54 543.40h1 M344.90 139.40h1 M344.90 543.40h1 M361.26 139.40h1 M361.26 543.40h1 M377.62 139.40h1 M377.62 543.40h1 M393.98 139.40h1 M393.98 543.40h1 M410.34 139.40h1 M410.34 543.40h1 M426.70 139.40h1 M426.70 543.40h1 M443.06 139.40h1 M443.06 543.40h1 M459.42 139.40h1 M459.42 543.40h1 M475.78 139.40h1 M475.78 543.40h1 M492.14 139.40h1 M492.14 543.40h1 M508.50 139.40h1 M508.50 543.40h1 M524.86 139.40h1 M524.86 543.40h1 M541.22 139.40h1 M541.22 543.40h1 M557.58 139.40h1 M557.58 543.40h1 M573.94 139.40h1 M573.94 543.40h1 M590.30 139.40h1 M590.30 543.40h1 M606.66 139.40h1 M606.66 543.40h1 M623.02 139.40h1 M623.02 543.40h1 M639.38 139.40h1 M639.38 543.40h1 M655.74 139.40h1 M655.74 543.40h1 M672.10 139.40h1 M672.10 543.40h1 M688.46 139.40h1 M688.46 543.40h1 M704.82 139.40h1 M704.82 543.40h1 M721.18 139.40h1 M721.18 543.40h1 M737.54 139.40h1 M737.54 543.40h1 M753.90 139.40h1 M753.90 543.40h1 M770.26 139.40h1 M770.26 543.40h1 M786.62 139.40h1 M786.62 543.40h1 M802.98 139.40h1 M802.98 543.40h1 M819.34 139.40h1 M819.34 543.40h1 M835.70 139.40h1 M835.70 543.40h1" stroke="#7c7660" stroke-width="1" fill="none"/>
<rect x="18.00" y="212.75" width="65.30" height="5.1" fill="#dcd800" opacity="0.35"/>
<rect x="18.00" y="217.45" width="65.30" height="1.8" fill="#dcd800" opacity="0.35"/>
<rect x="18.00" y="213.15" width="65.30" height="4.3" fill="#dcd800"/>
<rect x="83.30" y="164.05" width="102.25" height="5.1" fill="#dcd800" opacity="0.35"/>
<rect x="83.30" y="168.75" width="102.25" height="1.8" fill="#dcd800" opacity="0.35"/>
<rect x="83.30" y="164.45" width="102.25" height="4.3" fill="#dcd800"/>
<rect x="185.55" y="212.75" width="102.25" height="5.1" fill="#dcd800" opacity="0.35"/>
<rect x="185.55" y="217.45" width="102.25" height="1.8" fill="#dcd800" opacity="0.35"/>
<rect x="185.55" y="213.15" width="102.25" height="4.3" fill="#dcd800"/>
<rect x="287.80" y="164.05" width="102.25" height="5.1" fill="#dcd800" opacity="0.35"/>
<rect x="287.80" y="168.75" width="102.25" height="1.8" fill="#dcd800" opacity="0.35"/>
<rect x="287.80" y="164.45" width="102.25" height="4.3" fill="#dcd800"/>
<rect x="390.05" y="212.75" width="102.25" height="5.1" fill="#dcd800" opacity="0.35"/>
<rect x="390.05" y="217.45" width="102.25" height="1.8" fill="#dcd800" opacity="0.35"/>
<rect x="390.05" y="213.15" width="102.25" height="4.3" fill="#dcd800"/>
<rect x="492.30" y="164.05" width="102.25" height="5.1" fill="#dcd800" opacity="0.35"/>
<rect x="492.30" y="168.75" width="102.25" height="1.8" fill="#dcd800" opacity="0.35"/>
<rect x="492.30" y="164.45" width="102.25" height="4.3" fill="#dcd800"/>
<rect x="594.55" y="212.75" width="102.25" height="5.1" fill="#dcd800" opacity="0.35"/>
<rect x="594.55" y="217.45" width="102.25" height="1.8" fill="#dcd800" opacity="0.35"/>
<rect x="594.55" y="213.15" width="102.25" height="4.3" fill="#dcd800"/>
<rect x="696.80" y="164.05" width="102.25" height="5.1" fill="#dcd800" opacity="0.35"/>
<rect x="696.80" y="168.75" width="102.25" height="1.8" fill="#dcd800" opacity="0.35"/>
<rect x="696.80" y="164.45" width="102.25" height="4.3" fill="#dcd800"/>
<rect x="799.05" y="212.75" width="36.45" height="5.1" fill="#dcd800" opacity="0.35"/>
<rect x="799.05" y="217.45" width="36.45" height="1.8" fill="#dcd800" opacity="0.35"/>
<rect x="799.05" y="213.15" width="36.45" height="4.3" fill="#dcd800"/>
<path d="M18.5 213.2v-1.3 M21.1 213.2v-2.2 M22.2 213.2v-3.4 M27.3 213.2v-3.2 M28.9 213.2v-1.2 M31.4 213.2v-2.4 M36.0 213.2v-2.8 M44.6 217.5v3.4 M45.9 217.5v1.1 M47.6 213.2v-2.0 M58.2 213.2v-1.8 M61.1 213.2v-2.2 M63.7 217.5v1.5 M64.8 217.5v2.1 M67.6 217.5v1.8 M70.5 213.2v-1.4 M72.9 217.5v1.3 M80.1 217.5v2.8 M81.9 213.2v-2.0 M83.8 164.4v-1.3 M89.3 168.8v1.4 M94.2 168.8v2.0 M96.1 168.8v1.2 M100.1 164.4v-2.9 M102.6 168.8v3.8 M105.5 168.8v1.4 M111.7 164.4v-1.8 M113.7 168.8v3.3 M119.3 168.8v3.1 M120.6 164.4v-2.2 M125.2 164.4v-2.3 M127.2 168.8v2.6 M130.3 168.8v3.6 M132.9 168.8v2.7 M137.7 164.4v-2.5 M140.3 164.4v-1.5 M142.9 164.4v-2.1 M145.7 168.8v1.9 M149.6 164.4v-2.0 M153.1 164.4v-2.2 M159.6 164.4v-2.5 M168.4 164.4v-2.1 M173.7 168.8v2.1 M174.9 164.4v-3.2 M176.4 168.8v1.2 M180.6 168.8v2.9 M186.1 213.2v-1.8 M188.5 213.2v-2.1 M195.7 213.2v-2.8 M204.5 213.2v-1.7 M206.4 217.5v2.9 M210.6 217.5v2.1 M212.8 213.2v-2.4 M214.4 213.2v-2.9 M217.3 213.2v-1.0 M222.8 217.5v2.3 M227.8 213.2v-1.4 M232.8 213.2v-3.1 M236.9 217.5v2.3 M240.2 217.5v3.4 M246.2 217.5v1.0 M253.5 213.2v-4.0 M258.6 213.2v-1.7 M272.9 213.2v-2.4 M274.1 217.5v2.3 M281.3 213.2v-1.0 M283.7 213.2v-2.5 M286.3 217.5v2.5 M288.3 164.4v-2.0 M291.7 168.8v1.5 M293.9 164.4v-2.0 M299.8 164.4v-1.2 M301.4 164.4v-1.9 M306.0 164.4v-1.4 M307.1 168.8v2.5 M312.8 164.4v-2.8 M316.5 168.8v2.5 M321.8 168.8v2.9 M323.3 164.4v-1.8 M325.1 168.8v3.1 M327.3 168.8v2.9 M328.7 168.8v2.9 M338.9 164.4v-1.1 M340.3 168.8v1.6 M342.1 164.4v-2.0 M343.4 168.8v1.4 M345.5 168.8v1.7 M346.8 164.4v-1.2 M348.4 164.4v-2.6 M350.9 168.8v1.8 M360.9 168.8v2.8 M362.8 164.4v-2.6 M366.7 168.8v3.4 M369.6 164.4v-1.2 M381.5 168.8v1.3 M383.9 164.4v-1.1 M385.7 168.8v3.3 M387.3 164.4v-2.7 M389.4 164.4v-1.8 M390.6 217.5v2.3 M392.0 217.5v1.7 M394.4 213.2v-3.3 M398.9 217.5v2.5 M407.1 217.5v1.0 M408.2 217.5v1.8 M413.5 217.5v1.4 M416.3 213.2v-1.7 M417.5 213.2v-1.8 M425.3 217.5v2.5 M428.6 213.2v-1.9 M432.9 213.2v-1.5 M436.1 213.2v-1.0 M437.2 217.5v2.0 M442.4 217.5v3.9 M447.2 213.2v-1.6 M449.2 213.2v-1.3 M452.5 213.2v-3.6 M453.7 213.2v-2.4 M455.0 213.2v-2.8 M457.6 217.5v1.6 M460.0 213.2v-1.5 M463.0 213.2v-1.5 M465.3 213.2v-3.0 M469.0 213.2v-1.2 M471.9 217.5v2.7 M477.9 213.2v-1.1 M479.3 213.2v-2.2 M483.7 217.5v3.0 M485.8 213.2v-1.2 M488.1 217.5v1.3 M492.8 168.8v2.5 M497.6 164.4v-1.4 M500.5 168.8v3.1 M502.4 168.8v1.0 M506.6 164.4v-2.0 M517.6 164.4v-2.4 M523.5 164.4v-3.9 M525.3 164.4v-1.5 M528.9 168.8v3.6 M531.2 168.8v1.5 M533.1 168.8v1.0 M535.0 164.4v-2.2 M537.6 168.8v1.1 M538.8 164.4v-3.6 M541.6 168.8v3.8 M545.0 164.4v-2.2 M551.2 164.4v-2.6 M555.4 168.8v2.2 M559.5 168.8v1.5 M561.2 168.8v1.8 M568.4 164.4v-2.7 M574.4 168.8v1.7 M576.9 164.4v-1.4 M588.2 168.8v1.6 M591.5 168.8v3.0 M595.0 217.5v1.6 M597.3 213.2v-1.3 M599.7 217.5v1.1 M601.5 217.5v1.0 M607.9 213.2v-3.0 M609.4 213.2v-3.6 M610.7 217.5v2.2 M613.3 213.2v-1.6 M620.0 213.2v-3.7 M621.4 217.5v3.3 M623.9 217.5v2.1 M628.2 213.2v-2.0 M630.9 213.2v-1.3 M633.7 217.5v1.5 M636.6 217.5v2.9 M639.2 213.2v-2.2 M640.5 217.5v1.2 M644.5 213.2v-3.1 M655.2 213.2v-3.8 M659.4 213.2v-1.2 M661.0 217.5v1.5 M667.1 217.5v1.6 M669.4 213.2v-1.1 M671.5 217.5v1.9 M675.1 213.2v-2.0 M683.1 213.2v-2.6 M685.1 213.2v-3.8 M687.3 213.2v-1.8 M690.9 213.2v-1.9 M694.1 213.2v-2.1 M695.8 217.5v1.3 M697.3 164.4v-2.5 M712.1 164.4v-2.9 M714.9 168.8v1.3 M716.7 168.8v3.2 M718.7 164.4v-2.7 M722.6 164.4v-2.2 M725.4 168.8v2.1 M734.1 168.8v1.2 M736.4 164.4v-1.8 M737.9 168.8v1.9 M744.3 164.4v-2.7 M765.6 164.4v-1.5 M771.1 164.4v-1.6 M776.0 164.4v-3.8 M785.7 168.8v2.1 M789.0 164.4v-1.5 M793.5 168.8v2.3 M797.7 164.4v-2.9 M803.3 213.2v-2.2 M807.7 217.5v1.3 M809.4 213.2v-2.8 M814.5 217.5v2.8 M822.0 217.5v1.5 M824.1 213.2v-2.8 M828.8 217.5v2.7 M832.9 213.2v-3.6 M833.9 213.2v-2.5" stroke="#dcd800" stroke-width="0.9" opacity="0.55" fill="none"/>
<path d="M83.30 215.9V164.6 M185.55 166.0V217.3 M287.80 215.9V164.6 M390.05 166.0V217.3 M492.30 215.9V164.6 M594.55 166.0V217.3 M696.80 215.9V164.6 M799.05 166.0V217.3" stroke="#dcd800" stroke-width="1.0" fill="none" opacity="0.65"/>
<rect x="18.00" y="288.60" width="8.20" height="7.6" fill="#0ad2d2" opacity="0.35"/>
<rect x="18.00" y="290.10" width="8.20" height="4.6" fill="#0ad2d2"/>
<rect x="26.20" y="338.00" width="102.25" height="7.6" fill="#0ad2d2" opacity="0.35"/>
<rect x="26.20" y="339.50" width="102.25" height="4.6" fill="#0ad2d2"/>
<rect x="128.45" y="288.60" width="102.25" height="7.6" fill="#0ad2d2" opacity="0.35"/>
<rect x="128.45" y="290.10" width="102.25" height="4.6" fill="#0ad2d2"/>
<rect x="230.70" y="338.00" width="102.25" height="7.6" fill="#0ad2d2" opacity="0.35"/>
<rect x="230.70" y="339.50" width="102.25" height="4.6" fill="#0ad2d2"/>
<rect x="332.95" y="288.60" width="102.25" height="7.6" fill="#0ad2d2" opacity="0.35"/>
<rect x="332.95" y="290.10" width="102.25" height="4.6" fill="#0ad2d2"/>
<rect x="435.20" y="338.00" width="102.25" height="7.6" fill="#0ad2d2" opacity="0.35"/>
<rect x="435.20" y="339.50" width="102.25" height="4.6" fill="#0ad2d2"/>
<rect x="537.45" y="288.60" width="102.25" height="7.6" fill="#0ad2d2" opacity="0.35"/>
<rect x="537.45" y="290.10" width="102.25" height="4.6" fill="#0ad2d2"/>
<rect x="639.70" y="338.00" width="102.25" height="7.6" fill="#0ad2d2" opacity="0.35"/>
<rect x="639.70" y="339.50" width="102.25" height="4.6" fill="#0ad2d2"/>
<rect x="741.95" y="288.60" width="93.55" height="7.6" fill="#0ad2d2" opacity="0.35"/>
<rect x="741.95" y="290.10" width="93.55" height="4.6" fill="#0ad2d2"/>
<path d="M18.5 290.1v-5.2 M21.9 290.1v-2.1 M23.5 294.7v3.9 M26.7 344.1v2.0 M32.2 339.5v-1.6 M34.8 339.5v-2.4 M36.6 344.1v1.1 M52.6 339.5v-1.1 M58.4 344.1v1.8 M63.4 344.1v2.0 M67.4 339.5v-1.8 M69.4 339.5v-1.2 M74.0 339.5v-2.3 M75.5 339.5v-1.9 M80.2 339.5v-2.5 M82.7 344.1v2.3 M87.8 339.5v-5.6 M89.6 344.1v2.2 M91.8 344.1v2.9 M94.2 339.5v-2.6 M96.5 344.1v1.8 M100.6 344.1v2.9 M104.4 339.5v-2.7 M110.9 344.1v1.0 M116.4 339.5v-2.8 M123.4 344.1v1.2 M127.6 344.1v2.2 M131.1 294.7v1.8 M133.7 294.7v2.2 M137.0 294.7v1.4 M139.2 290.1v-2.6 M142.0 290.1v-2.3 M143.6 290.1v-1.6 M147.4 294.7v2.1 M154.7 290.1v-1.1 M156.5 294.7v1.1 M165.9 290.1v-1.6 M170.6 290.1v-1.3 M174.9 294.7v5.8 M180.9 294.7v2.5 M183.0 294.7v2.3 M184.5 290.1v-2.0 M189.9 290.1v-2.8 M192.8 290.1v-2.9 M198.2 294.7v5.9 M200.9 290.1v-2.3 M203.3 294.7v1.9 M206.1 294.7v1.8 M208.2 290.1v-2.6 M214.5 294.7v2.0 M218.9 294.7v1.5 M225.9 294.7v1.0 M227.3 290.1v-2.8 M228.5 290.1v-2.5 M236.5 339.5v-1.3 M238.7 344.1v1.1 M243.4 344.1v1.6 M244.6 344.1v2.5 M249.0 339.5v-2.4 M253.7 344.1v1.7 M260.0 339.5v-2.5 M264.5 339.5v-1.2 M268.0 344.1v2.7 M273.7 344.1v1.2 M275.0 339.5v-2.8 M277.7 339.5v-2.1 M280.6 339.5v-2.3 M284.9 344.1v1.5 M290.6 344.1v1.8 M295.5 344.1v1.8 M296.7 339.5v-1.6 M298.1 344.1v1.8 M315.1 344.1v2.3 M319.2 344.1v2.0 M321.3 344.1v2.5 M331.7 339.5v-1.6 M336.4 290.1v-2.8 M338.0 290.1v-1.5 M340.9 290.1v-2.7 M352.2 290.1v-2.2 M357.2 290.1v-2.6 M359.0 290.1v-1.8 M363.2 290.1v-2.6 M364.9 294.7v1.9 M372.8 290.1v-1.6 M374.7 294.7v1.5 M380.4 294.7v3.1 M388.0 294.7v5.0 M392.9 290.1v-1.7 M397.6 294.7v2.2 M401.2 290.1v-3.9 M409.6 290.1v-1.6 M411.5 290.1v-4.7 M413.8 290.1v-1.0 M416.7 290.1v-3.1 M424.4 290.1v-1.2 M425.5 294.7v2.9 M428.8 290.1v-2.5 M430.5 290.1v-5.7 M432.2 290.1v-5.7 M435.7 344.1v2.9 M438.6 339.5v-1.5 M440.1 344.1v2.4 M444.1 344.1v5.6 M446.2 344.1v2.1 M452.5 344.1v1.9 M455.3 339.5v-3.8 M457.4 344.1v2.6 M464.3 344.1v1.9 M466.4 344.1v3.0 M468.7 339.5v-2.7 M470.7 339.5v-2.5 M472.4 339.5v-1.2 M478.5 339.5v-1.6 M481.2 344.1v1.7 M486.5 344.1v5.0 M489.2 344.1v2.4 M492.3 339.5v-2.8 M503.7 344.1v2.0 M506.6 339.5v-2.5 M514.1 344.1v1.6 M516.6 339.5v-2.4 M518.2 344.1v2.9 M525.1 339.5v-2.4 M527.1 344.1v2.9 M528.5 344.1v2.6 M530.0 339.5v-1.7 M532.2 344.1v2.4 M533.7 344.1v2.0 M536.1 339.5v-2.4 M543.6 290.1v-2.5 M546.0 294.7v5.7 M549.3 294.7v1.6 M551.9 294.7v3.0 M556.1 294.7v1.9 M563.8 290.1v-5.3 M565.4 290.1v-2.3 M571.7 294.7v1.3 M573.1 294.7v2.1 M577.9 290.1v-1.3 M579.2 294.7v1.3 M580.4 294.7v1.9 M586.0 294.7v2.3 M588.8 290.1v-1.0 M591.6 294.7v1.6 M593.7 294.7v2.1 M604.9 294.7v2.4 M607.1 290.1v-1.7 M608.6 294.7v3.6 M611.0 294.7v2.2 M612.8 290.1v-1.9 M616.2 290.1v-2.7 M620.0 290.1v-1.9 M641.6 339.5v-1.2 M643.4 339.5v-1.1 M645.3 339.5v-1.3 M652.4 339.5v-2.5 M655.1 344.1v1.7 M657.5 339.5v-4.6 M660.1 344.1v6.0 M661.3 339.5v-1.2 M672.0 344.1v6.0 M676.6 344.1v1.4 M681.7 339.5v-1.5 M685.1 344.1v2.2 M687.5 344.1v1.9 M690.2 339.5v-1.9 M693.7 344.1v1.1 M707.2 339.5v-1.6 M709.6 339.5v-2.5 M713.1 344.1v1.7 M719.0 344.1v2.8 M722.5 344.1v1.1 M727.5 344.1v2.8 M734.4 344.1v2.8 M738.7 344.1v4.3 M749.3 290.1v-1.3 M753.0 294.7v2.5 M759.2 294.7v2.2 M760.7 294.7v1.0 M764.2 290.1v-1.2 M768.0 290.1v-1.7 M780.6 294.7v1.6 M781.9 294.7v2.0 M807.6 290.1v-1.4 M819.0 290.1v-1.5 M820.7 294.7v1.9 M826.2 294.7v2.5 M827.4 294.7v2.7 M834.4 294.7v2.8" stroke="#0ad2d2" stroke-width="0.9" opacity="0.55" fill="none"/>
<path d="M26.20 287.9V356.8 M128.45 346.3V277.4 M230.70 287.9V356.8 M332.95 346.3V277.4 M435.20 287.9V356.8 M537.45 346.3V277.4 M639.70 287.9V356.8 M741.95 346.3V277.4" stroke="#0ad2d2" stroke-width="1.0" fill="none" opacity="0.65"/>
<path d="M18.00 439.43 L18.50 440.32 L19.00 441.19 L19.50 442.01 L20.00 442.81 L20.50 443.60 L21.00 444.39 L21.50 445.19 L22.00 445.97 L22.50 446.75 L23.00 447.53 L23.50 448.30 L24.00 449.06 L24.50 449.81 L25.00 450.56 L25.50 451.29 L26.00 452.03 L26.50 452.76 L27.00 453.48 L27.50 454.19 L28.00 454.90 L28.50 455.60 L29.00 456.28 L29.50 456.95 L30.00 457.60 L30.50 458.24 L31.00 458.87 L31.50 459.48 L32.00 460.09 L32.50 460.69 L33.00 461.28 L33.50 461.85 L34.00 462.42 L34.50 462.97 L35.00 463.52 L35.50 464.05 L36.00 464.58 L36.50 465.10 L37.00 465.62 L37.50 466.12 L38.00 466.61 L38.50 467.09 L39.00 467.55 L39.50 468.00 L40.00 468.44 L40.50 468.87 L41.00 469.29 L41.50 469.70 L42.00 470.10 L42.50 470.49 L43.00 470.87 L43.50 471.24 L44.00 471.59 L44.50 471.94 L45.00 472.27 L45.50 472.60 L46.00 472.92 L46.50 473.22 L47.00 473.53 L47.50 473.82 L48.00 474.10 L48.50 474.38 L49.00 474.65 L49.50 474.91 L50.00 475.17 L50.50 475.42 L51.00 475.67 L51.50 475.91 L52.00 476.15 L52.50 476.38 L53.00 476.61 L53.50 476.84 L54.00 477.07 L54.50 477.29 L55.00 477.51 L55.50 477.72 L56.00 477.93 L56.50 478.14 L57.00 478.35 L57.50 478.56 L58.00 478.76 L58.50 478.96 L59.00 479.16 L59.50 479.35 L60.00 479.55 L60.50 479.74 L61.00 479.93 L61.50 480.11 L62.00 480.29 L62.50 480.47 L63.00 480.65 L63.50 480.83 L64.00 481.00 L64.50 481.18 L65.00 481.35 L65.50 481.52 L66.00 481.69 L66.50 481.86 L67.00 482.03 L67.50 482.20 L68.00 482.37 L68.50 482.53 L69.00 482.70 L69.50 482.86 L70.00 483.02 L70.50 483.18 L71.00 483.33 L71.50 483.49 L72.00 483.64 L72.50 483.79 L73.00 483.95 L73.50 484.10 L74.00 484.25 L74.50 484.41 L75.00 484.56 L75.50 484.72 L76.00 484.88 L76.50 485.04 L77.00 485.20 L77.50 485.37 L78.00 485.53 L78.50 485.70 L79.00 485.87 L79.50 486.05 L80.00 486.22 L80.50 486.39 L81.00 486.57 L81.50 486.75 L82.00 486.92 L82.50 487.10 L83.00 487.28 L83.50 487.46 L84.00 487.65 L84.50 487.83 L85.00 488.01 L85.50 488.20 L86.00 487.43 L86.50 486.63 L87.00 485.79 L87.50 484.92 L88.00 484.01 L88.50 483.07 L89.00 482.10 L89.50 481.09 L90.00 479.98 L90.50 478.76 L91.00 477.46 L91.50 476.12 L92.00 474.77 L92.50 473.45 L93.00 472.19 L93.50 471.03 L94.00 470.00 L94.50 469.14 L95.00 468.42 L95.50 467.78 L96.00 467.21 L96.50 466.66 L97.00 466.12 L97.50 465.56 L98.00 464.95 L98.50 464.26 L99.00 463.52 L99.50 462.76 L100.00 461.96 L100.50 461.12 L101.00 460.23 L101.50 459.28 L102.00 458.27 L102.50 457.17 L103.00 455.88 L103.50 454.38 L104.00 452.74 L104.50 451.04 L105.00 449.35 L105.50 447.74 L106.00 446.28 L106.50 445.02 L107.00 443.88 L107.50 442.80 L108.00 441.79 L108.50 440.83 L109.00 439.90 L109.50 438.98 L110.00 438.08 L110.50 437.16 L111.00 436.23 L111.50 435.26 L112.00 434.24 L112.50 433.16 L113.00 432.03 L113.50 430.85 L114.00 429.64 L114.50 428.41 L115.00 427.17 L115.50 425.94 L116.00 424.72 L116.50 423.52 L117.00 422.37 L117.50 421.26 L118.00 420.20 L118.50 419.17 L119.00 418.17 L119.50 417.17 L120.00 416.19 L120.50 415.20 L121.00 414.20 L121.50 413.18 L122.00 412.13 L122.50 411.04 L123.00 409.88 L123.50 408.68 L124.00 407.46 L124.50 406.25 L125.00 405.06 L125.50 403.94 L126.00 402.89 L126.50 401.94 L127.00 401.05 L127.50 400.21 L128.00 399.42 L128.50 398.65 L129.00 397.90 L129.50 397.15 L130.00 396.40 L130.50 395.64 L131.00 394.85 L131.50 394.02 L132.00 393.14 L132.50 392.21 L133.00 391.24 L133.50 390.24 L134.00 389.23 L134.50 388.22 L135.00 387.23 L135.50 386.27 L136.00 385.35 L136.50 384.48 L137.00 383.64 L137.50 382.82 L138.00 382.01 L138.50 381.23 L139.00 380.45 L139.50 379.70 L140.00 378.95 L140.50 378.22 L141.00 377.50 L141.50 376.79 L142.00 376.09 L142.50 375.39 L143.00 374.71 L143.50 374.05 L144.00 373.39 L144.50 372.75 L145.00 372.14 L145.50 371.53 L146.00 370.95 L146.50 370.39 L147.00 369.85 L147.50 369.32 L148.00 368.80 L148.50 368.29 L149.00 367.78 L149.50 367.29 L150.00 366.79 L150.50 366.30 L151.00 365.81 L151.50 365.34 L152.00 364.87 L152.50 364.41 L153.00 363.95 L153.50 363.49 L154.00 363.03 L154.50 362.56 L155.00 362.09 L155.50 361.60 L156.00 361.11 L156.50 360.60 L157.00 360.08 L157.50 359.57 L158.00 359.06 L158.50 358.57 L159.00 358.09 L159.50 357.63 L160.00 357.15 L160.50 356.67 L161.00 356.20 L161.50 355.74 L162.00 355.30 L162.50 354.89 L163.00 354.51 L163.50 354.18 L164.00 353.89 L164.50 353.65 L165.00 353.43 L165.50 353.23 L166.00 353.05 L166.50 352.88 L167.00 352.70 L167.50 352.50 L168.00 352.29 L168.50 352.05 L169.00 351.76 L169.50 351.41 L170.00 351.02 L170.50 350.61 L171.00 350.21 L171.50 349.83 L172.00 349.51 L172.50 349.26 L173.00 349.05 L173.50 348.88 L174.00 348.73 L174.50 348.59 L175.00 348.46 L175.50 348.34 L176.00 348.21 L176.50 348.07 L177.00 347.92 L177.50 347.75 L178.00 347.54 L178.50 347.27 L179.00 346.88 L179.50 346.44 L180.00 346.01 L180.50 345.68 L181.00 345.50 L181.50 345.43 L182.00 345.36 L182.50 345.30 L183.00 345.24 L183.50 345.19 L184.00 345.15 L184.50 345.11 L185.00 345.08 L185.50 345.05 L186.00 345.03 L186.50 345.01 L187.00 345.00 L187.50 345.00 L188.00 345.00 L188.50 345.02 L189.00 345.04 L189.50 345.07 L190.00 345.11 L190.50 345.16 L191.00 345.23 L191.50 345.30 L192.00 345.54 L192.50 346.05 L193.00 346.73 L193.50 347.50 L194.00 348.48 L194.50 349.79 L195.00 351.33 L195.50 352.99 L196.00 354.70 L196.50 356.64 L197.00 358.78 L197.50 361.01 L198.00 363.22 L198.50 365.33 L199.00 367.41 L199.50 369.48 L200.00 371.55 L200.50 373.61 L201.00 375.68 L201.50 377.75 L202.00 379.85 L202.50 381.96 L203.00 384.04 L203.50 386.07 L204.00 388.00 L204.50 389.84 L205.00 391.63 L205.50 393.37 L206.00 395.06 L206.50 396.71 L207.00 398.32 L207.50 399.88 L208.00 401.39 L208.50 402.87 L209.00 404.33 L209.50 405.81 L210.00 407.30 L210.50 408.81 L211.00 410.32 L211.50 411.83 L212.00 413.34 L212.50 414.84 L213.00 416.33 L213.50 417.81 L214.00 419.29 L214.50 420.79 L215.00 422.31 L215.50 423.80 L216.00 425.27 L216.50 426.68 L217.00 428.01 L217.50 429.24 L218.00 430.41 L218.50 431.53 L219.00 432.62 L219.50 433.67 L220.00 434.70 L220.50 435.69 L221.00 436.65 L221.50 437.60 L222.00 438.52 L222.50 439.43 L223.00 440.32 L223.50 441.19 L224.00 442.01 L224.50 442.81 L225.00 443.60 L225.50 444.39 L226.00 445.19 L226.50 445.97 L227.00 446.75 L227.50 447.53 L228.00 448.30 L228.50 449.06 L229.00 449.81 L229.50 450.56 L230.00 451.29 L230.50 452.03 L231.00 452.76 L231.50 453.48 L232.00 454.19 L232.50 454.90 L233.00 455.60 L233.50 456.28 L234.00 456.95 L234.50 457.60 L235.00 458.24 L235.50 458.87 L236.00 459.48 L236.50 460.09 L237.00 460.69 L237.50 461.28 L238.00 461.85 L238.50 462.42 L239.00 462.97 L239.50 463.52 L240.00 464.05 L240.50 464.58 L241.00 465.10 L241.50 465.62 L242.00 466.12 L242.50 466.61 L243.00 467.09 L243.50 467.55 L244.00 468.00 L244.50 468.44 L245.00 468.87 L245.50 469.29 L246.00 469.70 L246.50 470.10 L247.00 470.49 L247.50 470.87 L248.00 471.24 L248.50 471.59 L249.00 471.94 L249.50 472.27 L250.00 472.60 L250.50 472.92 L251.00 473.22 L251.50 473.53 L252.00 473.82 L252.50 474.10 L253.00 474.38 L253.50 474.65 L254.00 474.91 L254.50 475.17 L255.00 475.42 L255.50 475.67 L256.00 475.91 L256.50 476.15 L257.00 476.38 L257.50 476.61 L258.00 476.84 L258.50 477.07 L259.00 477.29 L259.50 477.51 L260.00 477.72 L260.50 477.93 L261.00 478.14 L261.50 478.35 L262.00 478.56 L262.50 478.76 L263.00 478.96 L263.50 479.16 L264.00 479.35 L264.50 479.55 L265.00 479.74 L265.50 479.93 L266.00 480.11 L266.50 480.29 L267.00 480.47 L267.50 480.65 L268.00 480.83 L268.50 481.00 L269.00 481.18 L269.50 481.35 L270.00 481.52 L270.50 481.69 L271.00 481.86 L271.50 482.03 L272.00 482.20 L272.50 482.37 L273.00 482.53 L273.50 482.70 L274.00 482.86 L274.50 483.02 L275.00 483.18 L275.50 483.33 L276.00 483.49 L276.50 483.64 L277.00 483.79 L277.50 483.95 L278.00 484.10 L278.50 484.25 L279.00 484.41 L279.50 484.56 L280.00 484.72 L280.50 484.88 L281.00 485.04 L281.50 485.20 L282.00 485.37 L282.50 485.53 L283.00 485.70 L283.50 485.87 L284.00 486.05 L284.50 486.22 L285.00 486.39 L285.50 486.57 L286.00 486.75 L286.50 486.92 L287.00 487.10 L287.50 487.28 L288.00 487.46 L288.50 487.65 L289.00 487.83 L289.50 488.01 L290.00 488.20 L290.50 487.43 L291.00 486.63 L291.50 485.79 L292.00 484.92 L292.50 484.01 L293.00 483.07 L293.50 482.10 L294.00 481.09 L294.50 479.98 L295.00 478.76 L295.50 477.46 L296.00 476.12 L296.50 474.77 L297.00 473.45 L297.50 472.19 L298.00 471.03 L298.50 470.00 L299.00 469.14 L299.50 468.42 L300.00 467.78 L300.50 467.21 L301.00 466.66 L301.50 466.12 L302.00 465.56 L302.50 464.95 L303.00 464.26 L303.50 463.52 L304.00 462.76 L304.50 461.96 L305.00 461.12 L305.50 460.23 L306.00 459.28 L306.50 458.27 L307.00 457.17 L307.50 455.88 L308.00 454.38 L308.50 452.74 L309.00 451.04 L309.50 449.35 L310.00 447.74 L310.50 446.28 L311.00 445.02 L311.50 443.88 L312.00 442.80 L312.50 441.79 L313.00 440.83 L313.50 439.90 L314.00 438.98 L314.50 438.08 L315.00 437.16 L315.50 436.23 L316.00 435.26 L316.50 434.24 L317.00 433.16 L317.50 432.03 L318.00 430.85 L318.50 429.64 L319.00 428.41 L319.50 427.17 L320.00 425.94 L320.50 424.72 L321.00 423.52 L321.50 422.37 L322.00 421.26 L322.50 420.20 L323.00 419.17 L323.50 418.17 L324.00 417.17 L324.50 416.19 L325.00 415.20 L325.50 414.20 L326.00 413.18 L326.50 412.13 L327.00 411.04 L327.50 409.88 L328.00 408.68 L328.50 407.46 L329.00 406.25 L329.50 405.06 L330.00 403.94 L330.50 402.89 L331.00 401.94 L331.50 401.05 L332.00 400.21 L332.50 399.42 L333.00 398.65 L333.50 397.90 L334.00 397.15 L334.50 396.40 L335.00 395.64 L335.50 394.85 L336.00 394.02 L336.50 393.14 L337.00 392.21 L337.50 391.24 L338.00 390.24 L338.50 389.23 L339.00 388.22 L339.50 387.23 L340.00 386.27 L340.50 385.35 L341.00 384.48 L341.50 383.64 L342.00 382.82 L342.50 382.01 L343.00 381.23 L343.50 380.45 L344.00 379.70 L344.50 378.95 L345.00 378.22 L345.50 377.50 L346.00 376.79 L346.50 376.09 L347.00 375.39 L347.50 374.71 L348.00 374.05 L348.50 373.39 L349.00 372.75 L349.50 372.14 L350.00 371.53 L350.50 370.95 L351.00 370.39 L351.50 369.85 L352.00 369.32 L352.50 368.80 L353.00 368.29 L353.50 367.78 L354.00 367.29 L354.50 366.79 L355.00 366.30 L355.50 365.81 L356.00 365.34 L356.50 364.87 L357.00 364.41 L357.50 363.95 L358.00 363.49 L358.50 363.03 L359.00 362.56 L359.50 362.09 L360.00 361.60 L360.50 361.11 L361.00 360.60 L361.50 360.08 L362.00 359.57 L362.50 359.06 L363.00 358.57 L363.50 358.09 L364.00 357.63 L364.50 357.15 L365.00 356.67 L365.50 356.20 L366.00 355.74 L366.50 355.30 L367.00 354.89 L367.50 354.51 L368.00 354.18 L368.50 353.89 L369.00 353.65 L369.50 353.43 L370.00 353.23 L370.50 353.05 L371.00 352.88 L371.50 352.70 L372.00 352.50 L372.50 352.29 L373.00 352.05 L373.50 351.76 L374.00 351.41 L374.50 351.02 L375.00 350.61 L375.50 350.21 L376.00 349.83 L376.50 349.51 L377.00 349.26 L377.50 349.05 L378.00 348.88 L378.50 348.73 L379.00 348.59 L379.50 348.46 L380.00 348.34 L380.50 348.21 L381.00 348.07 L381.50 347.92 L382.00 347.75 L382.50 347.54 L383.00 347.27 L383.50 346.88 L384.00 346.44 L384.50 346.01 L385.00 345.68 L385.50 345.50 L386.00 345.43 L386.50 345.36 L387.00 345.30 L387.50 345.24 L388.00 345.19 L388.50 345.15 L389.00 345.11 L389.50 345.08 L390.00 345.05 L390.50 345.03 L391.00 345.01 L391.50 345.00 L392.00 345.00 L392.50 345.00 L393.00 345.02 L393.50 345.04 L394.00 345.07 L394.50 345.11 L395.00 345.16 L395.50 345.23 L396.00 345.30 L396.50 345.54 L397.00 346.05 L397.50 346.73 L398.00 347.50 L398.50 348.48 L399.00 349.79 L399.50 351.33 L400.00 352.99 L400.50 354.70 L401.00 356.64 L401.50 358.78 L402.00 361.01 L402.50 363.22 L403.00 365.33 L403.50 367.41 L404.00 369.48 L404.50 371.55 L405.00 373.61 L405.50 375.68 L406.00 377.75 L406.50 379.85 L407.00 381.96 L407.50 384.04 L408.00 386.07 L408.50 388.00 L409.00 389.84 L409.50 391.63 L410.00 393.37 L410.50 395.06 L411.00 396.71 L411.50 398.32 L412.00 399.88 L412.50 401.39 L413.00 402.87 L413.50 404.33 L414.00 405.81 L414.50 407.30 L415.00 408.81 L415.50 410.32 L416.00 411.83 L416.50 413.34 L417.00 414.84 L417.50 416.33 L418.00 417.81 L418.50 419.29 L419.00 420.79 L419.50 422.31 L420.00 423.80 L420.50 425.27 L421.00 426.68 L421.50 428.01 L422.00 429.24 L422.50 430.41 L423.00 431.53 L423.50 432.62 L424.00 433.67 L424.50 434.70 L425.00 435.69 L425.50 436.65 L426.00 437.60 L426.50 438.52 L427.00 439.43 L427.50 440.32 L428.00 441.19 L428.50 442.01 L429.00 442.81 L429.50 443.60 L430.00 444.39 L430.50 445.19 L431.00 445.97 L431.50 446.75 L432.00 447.53 L432.50 448.30 L433.00 449.06 L433.50 449.81 L434.00 450.56 L434.50 451.29 L435.00 452.03 L435.50 452.76 L436.00 453.48 L436.50 454.19 L437.00 454.90 L437.50 455.60 L438.00 456.28 L438.50 456.95 L439.00 457.60 L439.50 458.24 L440.00 458.87 L440.50 459.48 L441.00 460.09 L441.50 460.69 L442.00 461.28 L442.50 461.85 L443.00 462.42 L443.50 462.97 L444.00 463.52 L444.50 464.05 L445.00 464.58 L445.50 465.10 L446.00 465.62 L446.50 466.12 L447.00 466.61 L447.50 467.09 L448.00 467.55 L448.50 468.00 L449.00 468.44 L449.50 468.87 L450.00 469.29 L450.50 469.70 L451.00 470.10 L451.50 470.49 L452.00 470.87 L452.50 471.24 L453.00 471.59 L453.50 471.94 L454.00 472.27 L454.50 472.60 L455.00 472.92 L455.50 473.22 L456.00 473.53 L456.50 473.82 L457.00 474.10 L457.50 474.38 L458.00 474.65 L458.50 474.91 L459.00 475.17 L459.50 475.42 L460.00 475.67 L460.50 475.91 L461.00 476.15 L461.50 476.38 L462.00 476.61 L462.50 476.84 L463.00 477.07 L463.50 477.29 L464.00 477.51 L464.50 477.72 L465.00 477.93 L465.50 478.14 L466.00 478.35 L466.50 478.56 L467.00 478.76 L467.50 478.96 L468.00 479.16 L468.50 479.35 L469.00 479.55 L469.50 479.74 L470.00 479.93 L470.50 480.11 L471.00 480.29 L471.50 480.47 L472.00 480.65 L472.50 480.83 L473.00 481.00 L473.50 481.18 L474.00 481.35 L474.50 481.52 L475.00 481.69 L475.50 481.86 L476.00 482.03 L476.50 482.20 L477.00 482.37 L477.50 482.53 L478.00 482.70 L478.50 482.86 L479.00 483.02 L479.50 483.18 L480.00 483.33 L480.50 483.49 L481.00 483.64 L481.50 483.79 L482.00 483.95 L482.50 484.10 L483.00 484.25 L483.50 484.41 L484.00 484.56 L484.50 484.72 L485.00 484.88 L485.50 485.04 L486.00 485.20 L486.50 485.37 L487.00 485.53 L487.50 485.70 L488.00 485.87 L488.50 486.05 L489.00 486.22 L489.50 486.39 L490.00 486.57 L490.50 486.75 L491.00 486.92 L491.50 487.10 L492.00 487.28 L492.50 487.46 L493.00 487.65 L493.50 487.83 L494.00 488.01 L494.50 488.20 L495.00 487.43 L495.50 486.63 L496.00 485.79 L496.50 484.92 L497.00 484.01 L497.50 483.07 L498.00 482.10 L498.50 481.09 L499.00 479.98 L499.50 478.76 L500.00 477.46 L500.50 476.12 L501.00 474.77 L501.50 473.45 L502.00 472.19 L502.50 471.03 L503.00 470.00 L503.50 469.14 L504.00 468.42 L504.50 467.78 L505.00 467.21 L505.50 466.66 L506.00 466.12 L506.50 465.56 L507.00 464.95 L507.50 464.26 L508.00 463.52 L508.50 462.76 L509.00 461.96 L509.50 461.12 L510.00 460.23 L510.50 459.28 L511.00 458.27 L511.50 457.17 L512.00 455.88 L512.50 454.38 L513.00 452.74 L513.50 451.04 L514.00 449.35 L514.50 447.74 L515.00 446.28 L515.50 445.02 L516.00 443.88 L516.50 442.80 L517.00 441.79 L517.50 440.83 L518.00 439.90 L518.50 438.98 L519.00 438.08 L519.50 437.16 L520.00 436.23 L520.50 435.26 L521.00 434.24 L521.50 433.16 L522.00 432.03 L522.50 430.85 L523.00 429.64 L523.50 428.41 L524.00 427.17 L524.50 425.94 L525.00 424.72 L525.50 423.52 L526.00 422.37 L526.50 421.26 L527.00 420.20 L527.50 419.17 L528.00 418.17 L528.50 417.17 L529.00 416.19 L529.50 415.20 L530.00 414.20 L530.50 413.18 L531.00 412.13 L531.50 411.04 L532.00 409.88 L532.50 408.68 L533.00 407.46 L533.50 406.25 L534.00 405.06 L534.50 403.94 L535.00 402.89 L535.50 401.94 L536.00 401.05 L536.50 400.21 L537.00 399.42 L537.50 398.65 L538.00 397.90 L538.50 397.15 L539.00 396.40 L539.50 395.64 L540.00 394.85 L540.50 394.02 L541.00 393.14 L541.50 392.21 L542.00 391.24 L542.50 390.24 L543.00 389.23 L543.50 388.22 L544.00 387.23 L544.50 386.27 L545.00 385.35 L545.50 384.48 L546.00 383.64 L546.50 382.82 L547.00 382.01 L547.50 381.23 L548.00 380.45 L548.50 379.70 L549.00 378.95 L549.50 378.22 L550.00 377.50 L550.50 376.79 L551.00 376.09 L551.50 375.39 L552.00 374.71 L552.50 374.05 L553.00 373.39 L553.50 372.75 L554.00 372.14 L554.50 371.53 L555.00 370.95 L555.50 370.39 L556.00 369.85 L556.50 369.32 L557.00 368.80 L557.50 368.29 L558.00 367.78 L558.50 367.29 L559.00 366.79 L559.50 366.30 L560.00 365.81 L560.50 365.34 L561.00 364.87 L561.50 364.41 L562.00 363.95 L562.50 363.49 L563.00 363.03 L563.50 362.56 L564.00 362.09 L564.50 361.60 L565.00 361.11 L565.50 360.60 L566.00 360.08 L566.50 359.57 L567.00 359.06 L567.50 358.57 L568.00 358.09 L568.50 357.63 L569.00 357.15 L569.50 356.67 L570.00 356.20 L570.50 355.74 L571.00 355.30 L571.50 354.89 L572.00 354.51 L572.50 354.18 L573.00 353.89 L573.50 353.65 L574.00 353.43 L574.50 353.23 L575.00 353.05 L575.50 352.88 L576.00 352.70 L576.50 352.50 L577.00 352.29 L577.50 352.05 L578.00 351.76 L578.50 351.41 L579.00 351.02 L579.50 350.61 L580.00 350.21 L580.50 349.83 L581.00 349.51 L581.50 349.26 L582.00 349.05 L582.50 348.88 L583.00 348.73 L583.50 348.59 L584.00 348.46 L584.50 348.34 L585.00 348.21 L585.50 348.07 L586.00 347.92 L586.50 347.75 L587.00 347.54 L587.50 347.27 L588.00 346.88 L588.50 346.44 L589.00 346.01 L589.50 345.68 L590.00 345.50 L590.50 345.43 L591.00 345.36 L591.50 345.30 L592.00 345.24 L592.50 345.19 L593.00 345.15 L593.50 345.11 L594.00 345.08 L594.50 345.05 L595.00 345.03 L595.50 345.01 L596.00 345.00 L596.50 345.00 L597.00 345.00 L597.50 345.02 L598.00 345.04 L598.50 345.07 L599.00 345.11 L599.50 345.16 L600.00 345.23 L600.50 345.30 L601.00 345.54 L601.50 346.05 L602.00 346.73 L602.50 347.50 L603.00 348.48 L603.50 349.79 L604.00 351.33 L604.50 352.99 L605.00 354.70 L605.50 356.64 L606.00 358.78 L606.50 361.01 L607.00 363.22 L607.50 365.33 L608.00 367.41 L608.50 369.48 L609.00 371.55 L609.50 373.61 L610.00 375.68 L610.50 377.75 L611.00 379.85 L611.50 381.96 L612.00 384.04 L612.50 386.07 L613.00 388.00 L613.50 389.84 L614.00 391.63 L614.50 393.37 L615.00 395.06 L615.50 396.71 L616.00 398.32 L616.50 399.88 L617.00 401.39 L617.50 402.87 L618.00 404.33 L618.50 405.81 L619.00 407.30 L619.50 408.81 L620.00 410.32 L620.50 411.83 L621.00 413.34 L621.50 414.84 L622.00 416.33 L622.50 417.81 L623.00 419.29 L623.50 420.79 L624.00 422.31 L624.50 423.80 L625.00 425.27 L625.50 426.68 L626.00 428.01 L626.50 429.24 L627.00 430.41 L627.50 431.53 L628.00 432.62 L628.50 433.67 L629.00 434.70 L629.50 435.69 L630.00 436.65 L630.50 437.60 L631.00 438.52 L631.50 439.43 L632.00 440.32 L632.50 441.19 L633.00 442.01 L633.50 442.81 L634.00 443.60 L634.50 444.39 L635.00 445.19 L635.50 445.97 L636.00 446.75 L636.50 447.53 L637.00 448.30 L637.50 449.06 L638.00 449.81 L638.50 450.56 L639.00 451.29 L639.50 452.03 L640.00 452.76 L640.50 453.48 L641.00 454.19 L641.50 454.90 L642.00 455.60 L642.50 456.28 L643.00 456.95 L643.50 457.60 L644.00 458.24 L644.50 458.87 L645.00 459.48 L645.50 460.09 L646.00 460.69 L646.50 461.28 L647.00 461.85 L647.50 462.42 L648.00 462.97 L648.50 463.52 L649.00 464.05 L649.50 464.58 L650.00 465.10 L650.50 465.62 L651.00 466.12 L651.50 466.61 L652.00 467.09 L652.50 467.55 L653.00 468.00 L653.50 468.44 L654.00 468.87 L654.50 469.29 L655.00 469.70 L655.50 470.10 L656.00 470.49 L656.50 470.87 L657.00 471.24 L657.50 471.59 L658.00 471.94 L658.50 472.27 L659.00 472.60 L659.50 472.92 L660.00 473.22 L660.50 473.53 L661.00 473.82 L661.50 474.10 L662.00 474.38 L662.50 474.65 L663.00 474.91 L663.50 475.17 L664.00 475.42 L664.50 475.67 L665.00 475.91 L665.50 476.15 L666.00 476.38 L666.50 476.61 L667.00 476.84 L667.50 477.07 L668.00 477.29 L668.50 477.51 L669.00 477.72 L669.50 477.93 L670.00 478.14 L670.50 478.35 L671.00 478.56 L671.50 478.76 L672.00 478.96 L672.50 479.16 L673.00 479.35 L673.50 479.55 L674.00 479.74 L674.50 479.93 L675.00 480.11 L675.50 480.29 L676.00 480.47 L676.50 480.65 L677.00 480.83 L677.50 481.00 L678.00 481.18 L678.50 481.35 L679.00 481.52 L679.50 481.69 L680.00 481.86 L680.50 482.03 L681.00 482.20 L681.50 482.37 L682.00 482.53 L682.50 482.70 L683.00 482.86 L683.50 483.02 L684.00 483.18 L684.50 483.33 L685.00 483.49 L685.50 483.64 L686.00 483.79 L686.50 483.95 L687.00 484.10 L687.50 484.25 L688.00 484.41 L688.50 484.56 L689.00 484.72 L689.50 484.88 L690.00 485.04 L690.50 485.20 L691.00 485.37 L691.50 485.53 L692.00 485.70 L692.50 485.87 L693.00 486.05 L693.50 486.22 L694.00 486.39 L694.50 486.57 L695.00 486.75 L695.50 486.92 L696.00 487.10 L696.50 487.28 L697.00 487.46 L697.50 487.65 L698.00 487.83 L698.50 488.01 L699.00 488.20 L699.50 487.43 L700.00 486.63 L700.50 485.79 L701.00 484.92 L701.50 484.01 L702.00 483.07 L702.50 482.10 L703.00 481.09 L703.50 479.98 L704.00 478.76 L704.50 477.46 L705.00 476.12 L705.50 474.77 L706.00 473.45 L706.50 472.19 L707.00 471.03 L707.50 470.00 L708.00 469.14 L708.50 468.42 L709.00 467.78 L709.50 467.21 L710.00 466.66 L710.50 466.12 L711.00 465.56 L711.50 464.95 L712.00 464.26 L712.50 463.52 L713.00 462.76 L713.50 461.96 L714.00 461.12 L714.50 460.23 L715.00 459.28 L715.50 458.27 L716.00 457.17 L716.50 455.88 L717.00 454.38 L717.50 452.74 L718.00 451.04 L718.50 449.35 L719.00 447.74 L719.50 446.28 L720.00 445.02 L720.50 443.88 L721.00 442.80 L721.50 441.79 L722.00 440.83 L722.50 439.90 L723.00 438.98 L723.50 438.08 L724.00 437.16 L724.50 436.23 L725.00 435.26 L725.50 434.24 L726.00 433.16 L726.50 432.03 L727.00 430.85 L727.50 429.64 L728.00 428.41 L728.50 427.17 L729.00 425.94 L729.50 424.72 L730.00 423.52 L730.50 422.37 L731.00 421.26 L731.50 420.20 L732.00 419.17 L732.50 418.17 L733.00 417.17 L733.50 416.19 L734.00 415.20 L734.50 414.20 L735.00 413.18 L735.50 412.13 L736.00 411.04 L736.50 409.88 L737.00 408.68 L737.50 407.46 L738.00 406.25 L738.50 405.06 L739.00 403.94 L739.50 402.89 L740.00 401.94 L740.50 401.05 L741.00 400.21 L741.50 399.42 L742.00 398.65 L742.50 397.90 L743.00 397.15 L743.50 396.40 L744.00 395.64 L744.50 394.85 L745.00 394.02 L745.50 393.14 L746.00 392.21 L746.50 391.24 L747.00 390.24 L747.50 389.23 L748.00 388.22 L748.50 387.23 L749.00 386.27 L749.50 385.35 L750.00 384.48 L750.50 383.64 L751.00 382.82 L751.50 382.01 L752.00 381.23 L752.50 380.45 L753.00 379.70 L753.50 378.95 L754.00 378.22 L754.50 377.50 L755.00 376.79 L755.50 376.09 L756.00 375.39 L756.50 374.71 L757.00 374.05 L757.50 373.39 L758.00 372.75 L758.50 372.14 L759.00 371.53 L759.50 370.95 L760.00 370.39 L760.50 369.85 L761.00 369.32 L761.50 368.80 L762.00 368.29 L762.50 367.78 L763.00 367.29 L763.50 366.79 L764.00 366.30 L764.50 365.81 L765.00 365.34 L765.50 364.87 L766.00 364.41 L766.50 363.95 L767.00 363.49 L767.50 363.03 L768.00 362.56 L768.50 362.09 L769.00 361.60 L769.50 361.11 L770.00 360.60 L770.50 360.08 L771.00 359.57 L771.50 359.06 L772.00 358.57 L772.50 358.09 L773.00 357.63 L773.50 357.15 L774.00 356.67 L774.50 356.20 L775.00 355.74 L775.50 355.30 L776.00 354.89 L776.50 354.51 L777.00 354.18 L777.50 353.89 L778.00 353.65 L778.50 353.43 L779.00 353.23 L779.50 353.05 L780.00 352.88 L780.50 352.70 L781.00 352.50 L781.50 352.29 L782.00 352.05 L782.50 351.76 L783.00 351.41 L783.50 351.02 L784.00 350.61 L784.50 350.21 L785.00 349.83 L785.50 349.51 L786.00 349.26 L786.50 349.05 L787.00 348.88 L787.50 348.73 L788.00 348.59 L788.50 348.46 L789.00 348.34 L789.50 348.21 L790.00 348.07 L790.50 347.92 L791.00 347.75 L791.50 347.54 L792.00 347.27 L792.50 346.88 L793.00 346.44 L793.50 346.01 L794.00 345.68 L794.50 345.50 L795.00 345.43 L795.50 345.36 L796.00 345.30 L796.50 345.24 L797.00 345.19 L797.50 345.15 L798.00 345.11 L798.50 345.08 L799.00 345.05 L799.50 345.03 L800.00 345.01 L800.50 345.00 L801.00 345.00 L801.50 345.00 L802.00 345.02 L802.50 345.04 L803.00 345.07 L803.50 345.11 L804.00 345.16 L804.50 345.23 L805.00 345.30 L805.50 345.54 L806.00 346.05 L806.50 346.73 L807.00 347.50 L807.50 348.48 L808.00 349.79 L808.50 351.33 L809.00 352.99 L809.50 354.70 L810.00 356.64 L810.50 358.78 L811.00 361.01 L811.50 363.22 L812.00 365.33 L812.50 367.41 L813.00 369.48 L813.50 371.55 L814.00 373.61 L814.50 375.68 L815.00 377.75 L815.50 379.85 L816.00 381.96 L816.50 384.04 L817.00 386.07 L817.50 388.00 L818.00 389.84 L818.50 391.63 L819.00 393.37 L819.50 395.06 L820.00 396.71 L820.50 398.32 L821.00 399.88 L821.50 401.39 L822.00 402.87 L822.50 404.33 L823.00 405.81 L823.50 407.30 L824.00 408.81 L824.50 410.32 L825.00 411.83 L825.50 413.34 L826.00 414.84 L826.50 416.33 L827.00 417.81 L827.50 419.29 L828.00 420.79 L828.50 422.31 L829.00 423.80 L829.50 425.27 L830.00 426.68 L830.50 428.01 L831.00 429.24 L831.50 430.41 L832.00 431.53 L832.50 432.62 L833.00 433.67 L833.50 434.70 L834.00 435.69 L834.50 436.65 L835.00 437.60 L835.50 438.52" stroke="#14e214" stroke-width="2.5" fill="none" stroke-linejoin="round"/>
<rect x="18" y="208" width="35" height="16" fill="#000"/>
<rect x="18" y="333" width="39" height="16" fill="#000"/>
<text x="20.7" y="221.1" font-family="Liberation Sans" font-size="12.5" font-weight="normal" fill="#e8e8e8" text-anchor="start" textLength="30.7" lengthAdjust="spacing"  stroke="#e8e8e8" stroke-width="0.25" xml:space="preserve">PWM</text>
<text x="20.6" y="345.8" font-family="Liberation Sans" font-size="12.5" font-weight="normal" fill="#e8e8e8" text-anchor="start" textLength="35.5" lengthAdjust="spacing"  stroke="#e8e8e8" stroke-width="0.25" xml:space="preserve">ADIM</text>
<text x="20.5" y="506.7" font-family="Liberation Sans" font-size="12.5" font-weight="normal" fill="#e8e8e8" text-anchor="start" textLength="54" lengthAdjust="spacing"  stroke="#e8e8e8" stroke-width="0.25" xml:space="preserve">LED_cur</text>
<path d="M1.6 211.89999999999998 q0 -1.2 1.2 -1.2 h8.2 l6.2 6.8 l-6.2 6.8 h-8.2 q-1.2 0 -1.2 -1.2z" fill="#000" stroke="#f2ee00" stroke-width="1.2"/>
<path d="M7.50 221.80 V213.20 L5.10 214.90" stroke="#f2ee00" stroke-width="1.7" fill="none" stroke-linejoin="miter"/>
<path d="M1.6 336.2 q0 -1.2 1.2 -1.2 h8.2 l6.2 6.8 l-6.2 6.8 h-8.2 q-1.2 0 -1.2 -1.2z" fill="#0ccad8" stroke="#0ccad8" stroke-width="1.2"/>
<text x="7.2" y="346.3" font-family="Liberation Sans" font-size="12.5" font-weight="normal" fill="#000" text-anchor="middle"  stroke="#000" stroke-width="0.6" xml:space="preserve">2</text>
<path d="M1.6 497.59999999999997 q0 -1.2 1.2 -1.2 h8.2 l6.2 6.8 l-6.2 6.8 h-8.2 q-1.2 0 -1.2 -1.2z" fill="#000" stroke="#0ea80e" stroke-width="1.2"/>
<text x="7.2" y="507.7" font-family="Liberation Sans" font-size="12.5" font-weight="normal" fill="#0ea80e" text-anchor="middle"  stroke="#0ea80e" stroke-width="0.6" xml:space="preserve">4</text>
<path d="M692.6999999999999 136.9 h9.2 l-4.6 5z" fill="#f8a000"/>
<path d="M692.1999999999999 143.70000000000002 q0 -1.3 1.3 -1.3 h7.6 q1.3 0 1.3 1.3 v8.7 l-5.1 3 l-5.1 -3z" fill="#f8a000"/>
<path d="M693.0999999999999 144.6 h8.2 M697.1999999999999 144.6 v8" stroke="#000" stroke-width="1.6" fill="none"/>
<path d="M826.5 188.4 l6 -4.5 v9z" fill="#f2ee00"/><path d="M831 188.4 h5" stroke="#f2ee00" stroke-width="1.3"/>
<rect x="17.8" y="533.8" width="452.5" height="15.5" rx="5" fill="#000" stroke="#a0a0a8" stroke-width="1.4"/>
<rect x="22.2" y="536.6" width="20.7" height="12" rx="6.0" fill="#f2ee00"/>
<path d="M33.05 547.10 V538.10 L30.65 539.80" stroke="#000" stroke-width="1.5" fill="none" stroke-linejoin="miter"/>
<text x="56.5" y="546.6" font-family="Liberation Sans" font-size="12.5" font-weight="normal" fill="#f2ee00" text-anchor="start" textLength="40.4" lengthAdjust="spacing"  stroke="#f2ee00" stroke-width="0.25" xml:space="preserve">5.00 V</text>
<rect x="135.8" y="536.6" width="20.7" height="12" rx="6.0" fill="#0ccad8"/>
<text x="146.15" y="546.9" font-family="Liberation Sans" font-size="12" font-weight="normal" fill="#000" text-anchor="middle"  stroke="#000" stroke-width="0.3" xml:space="preserve">2</text>
<text x="170.6" y="546.6" font-family="Liberation Sans" font-size="12.5" font-weight="normal" fill="#0ccad8" text-anchor="start" textLength="40.4" lengthAdjust="spacing"  stroke="#0ccad8" stroke-width="0.25" xml:space="preserve">5.00 V</text>
<rect x="363.3" y="536.6" width="20.7" height="12" rx="6.0" fill="#10a010"/>
<text x="373.65000000000003" y="546.9" font-family="Liberation Sans" font-size="12" font-weight="normal" fill="#000" text-anchor="middle"  stroke="#000" stroke-width="0.3" xml:space="preserve">4</text>
<text x="397.9" y="546.6" font-family="Liberation Sans" font-size="12.5" font-weight="normal" fill="#0ca00c" text-anchor="start" textLength="44.6" lengthAdjust="spacing"  stroke="#0ca00c" stroke-width="0.25" xml:space="preserve">500mA</text>
<text x="118" y="543" font-family="Liberation Sans" font-size="6.5" font-weight="normal" fill="#f2ee00" text-anchor="start"  xml:space="preserve">B</text>
<text x="121.5" y="547" font-family="Liberation Sans" font-size="6.5" font-weight="normal" fill="#f2ee00" text-anchor="start"  xml:space="preserve">W</text>
<text x="458" y="543" font-family="Liberation Sans" font-size="6.5" font-weight="normal" fill="#0ca00c" text-anchor="start"  xml:space="preserve">B</text>
<text x="461.5" y="547" font-family="Liberation Sans" font-size="6.5" font-weight="normal" fill="#0ca00c" text-anchor="start"  xml:space="preserve">W</text>
<rect x="17.8" y="552.3" width="452.5" height="75" rx="6" fill="#000" stroke="#a0a0a8" stroke-width="1.4"/>
<text x="130.1" y="565" font-family="Liberation Sans" font-size="12.5" font-weight="normal" fill="#e8e8e8" text-anchor="start" textLength="35.3" lengthAdjust="spacing"  stroke="#e8e8e8" stroke-width="0.25" xml:space="preserve">Value</text>
<text x="202.2" y="565" font-family="Liberation Sans" font-size="12.5" font-weight="normal" fill="#e8e8e8" text-anchor="start" textLength="34.1" lengthAdjust="spacing"  stroke="#e8e8e8" stroke-width="0.25" xml:space="preserve">Mean</text>
<text x="270" y="565" font-family="Liberation Sans" font-size="12.5" font-weight="normal" fill="#e8e8e8" text-anchor="start" textLength="22.2" lengthAdjust="spacing"  stroke="#e8e8e8" stroke-width="0.25" xml:space="preserve">Min</text>
<text x="337.3" y="565" font-family="Liberation Sans" font-size="12.5" font-weight="normal" fill="#e8e8e8" text-anchor="start" textLength="25.8" lengthAdjust="spacing"  stroke="#e8e8e8" stroke-width="0.25" xml:space="preserve">Max</text>
<text x="403.6" y="565" font-family="Liberation Sans" font-size="12.5" font-weight="normal" fill="#e8e8e8" text-anchor="start" textLength="49.5" lengthAdjust="spacing"  stroke="#e8e8e8" stroke-width="0.25" xml:space="preserve">Std Dev</text>
<rect x="22.2" y="568.8000000000001" width="20.7" height="12.8" rx="6.4" fill="#0ccad8"/>
<text x="32.55" y="579.5" font-family="Liberation Sans" font-size="12" font-weight="normal" fill="#000" text-anchor="middle"  stroke="#000" stroke-width="0.3" xml:space="preserve">2</text>
<text x="47" y="579.2" font-family="Liberation Sans" font-size="12.5" font-weight="normal" fill="#0ccad8" text-anchor="start" textLength="40.3" lengthAdjust="spacing"  stroke="#0ccad8" stroke-width="0.25" xml:space="preserve">+Duty</text>
<text x="130.1" y="579.2" font-family="Liberation Sans" font-size="12.5" font-weight="normal" fill="#0ccad8" text-anchor="start" textLength="51.6" lengthAdjust="spacing"  stroke="#0ccad8" stroke-width="0.25" xml:space="preserve">50.00 %</text>
<text x="202.2" y="579.2" font-family="Liberation Sans" font-size="12.5" font-weight="normal" fill="#0ccad8" text-anchor="start" textLength="35.8" lengthAdjust="spacing"  stroke="#0ccad8" stroke-width="0.25" xml:space="preserve">50.00</text>
<text x="270" y="579.2" font-family="Liberation Sans" font-size="12.5" font-weight="normal" fill="#0ccad8" text-anchor="start" textLength="35.8" lengthAdjust="spacing"  stroke="#0ccad8" stroke-width="0.25" xml:space="preserve">50.00</text>
<text x="337.3" y="579.2" font-family="Liberation Sans" font-size="12.5" font-weight="normal" fill="#0ccad8" text-anchor="start" textLength="35.8" lengthAdjust="spacing"  stroke="#0ccad8" stroke-width="0.25" xml:space="preserve">50.00</text>
<text x="403.6" y="579.2" font-family="Liberation Sans" font-size="12.5" font-weight="normal" fill="#0ccad8" text-anchor="start" textLength="43.7" lengthAdjust="spacing"  stroke="#0ccad8" stroke-width="0.25" xml:space="preserve">463.5µ</text>
<rect x="22.2" y="583.4" width="20.7" height="12.8" rx="6.4" fill="#f2ee00"/>
<path d="M33.05 594.30 V585.30 L30.65 587.00" stroke="#000" stroke-width="1.5" fill="none" stroke-linejoin="miter"/>
<text x="47" y="593.8" font-family="Liberation Sans" font-size="12.5" font-weight="normal" fill="#f2ee00" text-anchor="start" textLength="65.8" lengthAdjust="spacing"  stroke="#f2ee00" stroke-width="0.25" xml:space="preserve">Frequency</text>
<text x="130.1" y="593.8" font-family="Liberation Sans" font-size="12.5" font-weight="normal" fill="#f2ee00" text-anchor="start" textLength="59.0" lengthAdjust="spacing"  stroke="#f2ee00" stroke-width="0.25" xml:space="preserve">20.00kHz</text>
<text x="202.2" y="593.8" font-family="Liberation Sans" font-size="12.5" font-weight="normal" fill="#f2ee00" text-anchor="start" textLength="43.0" lengthAdjust="spacing"  stroke="#f2ee00" stroke-width="0.25" xml:space="preserve">20.00k</text>
<text x="270" y="593.8" font-family="Liberation Sans" font-size="12.5" font-weight="normal" fill="#f2ee00" text-anchor="start" textLength="43.0" lengthAdjust="spacing"  stroke="#f2ee00" stroke-width="0.25" xml:space="preserve">20.00k</text>
<text x="337.3" y="593.8" font-family="Liberation Sans" font-size="12.5" font-weight="normal" fill="#f2ee00" text-anchor="start" textLength="43.0" lengthAdjust="spacing"  stroke="#f2ee00" stroke-width="0.25" xml:space="preserve">20.00k</text>
<text x="403.6" y="593.8" font-family="Liberation Sans" font-size="12.5" font-weight="normal" fill="#f2ee00" text-anchor="start" textLength="48.0" lengthAdjust="spacing"  stroke="#f2ee00" stroke-width="0.25" xml:space="preserve">184.1m</text>
<rect x="22.2" y="598.0" width="20.7" height="12.8" rx="6.4" fill="#f2ee00"/>
<path d="M33.05 608.90 V599.90 L30.65 601.60" stroke="#000" stroke-width="1.5" fill="none" stroke-linejoin="miter"/>
<text x="47" y="608.4" font-family="Liberation Sans" font-size="12.5" font-weight="normal" fill="#f2ee00" text-anchor="start" textLength="40.3" lengthAdjust="spacing"  stroke="#f2ee00" stroke-width="0.25" xml:space="preserve">+Duty</text>
<text x="130.1" y="608.4" font-family="Liberation Sans" font-size="12.5" font-weight="normal" fill="#f2ee00" text-anchor="start" textLength="51.6" lengthAdjust="spacing"  stroke="#f2ee00" stroke-width="0.25" xml:space="preserve">50.00 %</text>
<text x="202.2" y="608.4" font-family="Liberation Sans" font-size="12.5" font-weight="normal" fill="#f2ee00" text-anchor="start" textLength="35.8" lengthAdjust="spacing"  stroke="#f2ee00" stroke-width="0.25" xml:space="preserve">50.00</text>
<text x="270" y="608.4" font-family="Liberation Sans" font-size="12.5" font-weight="normal" fill="#f2ee00" text-anchor="start" textLength="35.8" lengthAdjust="spacing"  stroke="#f2ee00" stroke-width="0.25" xml:space="preserve">50.00</text>
<text x="337.3" y="608.4" font-family="Liberation Sans" font-size="12.5" font-weight="normal" fill="#f2ee00" text-anchor="start" textLength="35.8" lengthAdjust="spacing"  stroke="#f2ee00" stroke-width="0.25" xml:space="preserve">50.00</text>
<text x="403.6" y="608.4" font-family="Liberation Sans" font-size="12.5" font-weight="normal" fill="#f2ee00" text-anchor="start" textLength="43.7" lengthAdjust="spacing"  stroke="#f2ee00" stroke-width="0.25" xml:space="preserve">679.9µ</text>
<rect x="22.2" y="612.4" width="20.7" height="12.8" rx="6.4" fill="#10a010"/>
<text x="32.55" y="623.0999999999999" font-family="Liberation Sans" font-size="12" font-weight="normal" fill="#000" text-anchor="middle"  stroke="#000" stroke-width="0.3" xml:space="preserve">4</text>
<text x="47" y="622.8" font-family="Liberation Sans" font-size="12.5" font-weight="normal" fill="#0ca00c" text-anchor="start" textLength="34.1" lengthAdjust="spacing"  stroke="#0ca00c" stroke-width="0.25" xml:space="preserve">Mean</text>
<text x="130.1" y="622.8" font-family="Liberation Sans" font-size="12.5" font-weight="normal" fill="#0ca00c" text-anchor="start" textLength="44.6" lengthAdjust="spacing"  stroke="#0ca00c" stroke-width="0.25" xml:space="preserve">995mA</text>
<text x="202.2" y="622.8" font-family="Liberation Sans" font-size="12.5" font-weight="normal" fill="#0ca00c" text-anchor="start" textLength="36.0" lengthAdjust="spacing"  stroke="#0ca00c" stroke-width="0.25" xml:space="preserve">337m</text>
<text x="270" y="622.8" font-family="Liberation Sans" font-size="12.5" font-weight="normal" fill="#0ca00c" text-anchor="start" textLength="40.0" lengthAdjust="spacing"  stroke="#0ca00c" stroke-width="0.25" xml:space="preserve">3.36m</text>
<text x="337.3" y="622.8" font-family="Liberation Sans" font-size="12.5" font-weight="normal" fill="#0ca00c" text-anchor="start" textLength="36.0" lengthAdjust="spacing"  stroke="#0ca00c" stroke-width="0.25" xml:space="preserve">996m</text>
<text x="403.6" y="622.8" font-family="Liberation Sans" font-size="12.5" font-weight="normal" fill="#0ca00c" text-anchor="start" textLength="36.0" lengthAdjust="spacing"  stroke="#0ca00c" stroke-width="0.25" xml:space="preserve">470m</text>
<rect x="479" y="548.8" width="119.5" height="30" rx="5" fill="#000" stroke="#c4c4cc" stroke-width="1.1"/>
<text x="483" y="561.2" font-family="Liberation Sans" font-size="12.5" font-weight="normal" fill="#e8e8e8" text-anchor="start" textLength="57.5" lengthAdjust="spacing"  stroke="#e8e8e8" stroke-width="0.25" xml:space="preserve">Z 20.0µs</text>
<rect x="482.5" y="565.1" width="9.8" height="10.9" rx="1.8" fill="#f5a000"/>
<path d="M484.2 567.5 h6.7 M487.5 567.5 V575" stroke="#000" stroke-width="1.4" fill="none"/>
<path d="M493.2 570.9 h4.2" stroke="#f5a000" stroke-width="1.3"/><path d="M497 568.2 L500.3 570.9 L497 573.7z" fill="#f5a000"/>
<path d="M500.9 568 h9.5 l-4.75 5z" fill="#f5a000"/>
<text x="511.5" y="575" font-family="Liberation Sans" font-size="12.5" font-weight="normal" fill="#f5a000" text-anchor="start" textLength="62.2" lengthAdjust="spacing"  stroke="#f5a000" stroke-width="0.25" xml:space="preserve">0.00000 s</text>
<rect x="607.3" y="548.8" width="85.7" height="30" rx="5" fill="#000" stroke="#c4c4cc" stroke-width="1.1"/>
<text x="612.2" y="561.2" font-family="Liberation Sans" font-size="12.5" font-weight="normal" fill="#e8e8e8" text-anchor="start" textLength="57" lengthAdjust="spacing"  stroke="#e8e8e8" stroke-width="0.25" xml:space="preserve">500MS/s</text>
<text x="612.2" y="575" font-family="Liberation Sans" font-size="12.5" font-weight="normal" fill="#e8e8e8" text-anchor="start" textLength="73.5" lengthAdjust="spacing"  stroke="#e8e8e8" stroke-width="0.25" xml:space="preserve">10M points</text>
<rect x="702.1" y="548.9" width="134.2" height="29.8" rx="5" fill="#000" stroke="#c4c4cc" stroke-width="1.1"/>
<rect x="728.2" y="551" width="20" height="13" rx="6.5" fill="#f2ee00"/>
<path d="M738.70 562.00 V553.00 L736.30 554.70" stroke="#000" stroke-width="1.5" fill="none" stroke-linejoin="miter"/>
<path d="M759.5 561.3 h3.5 l3 -8 h3.5" stroke="#e8e8e8" stroke-width="1.5" fill="none"/>
<text x="787.7" y="561.3" font-family="Liberation Sans" font-size="12.5" font-weight="normal" fill="#e8e8e8" text-anchor="start" textLength="40.4" lengthAdjust="spacing"  stroke="#e8e8e8" stroke-width="0.25" xml:space="preserve">3.60 V</text>
<rect x="745" y="597.2" width="91.3" height="29.3" rx="5" fill="#000" stroke="#c4c4cc" stroke-width="1.1"/>
<text x="757.5" y="610.1" font-family="Liberation Sans" font-size="12.5" font-weight="normal" fill="#e8e8e8" text-anchor="start" textLength="75" lengthAdjust="spacing"  stroke="#e8e8e8" stroke-width="0.25" xml:space="preserve">9 Jan  2023</text>
<text x="750.4" y="622.7" font-family="Liberation Sans" font-size="12.5" font-weight="normal" fill="#e8e8e8" text-anchor="start" textLength="56.1" lengthAdjust="spacing"  stroke="#e8e8e8" stroke-width="0.25" xml:space="preserve">17:20:47</text></svg></body></html>
